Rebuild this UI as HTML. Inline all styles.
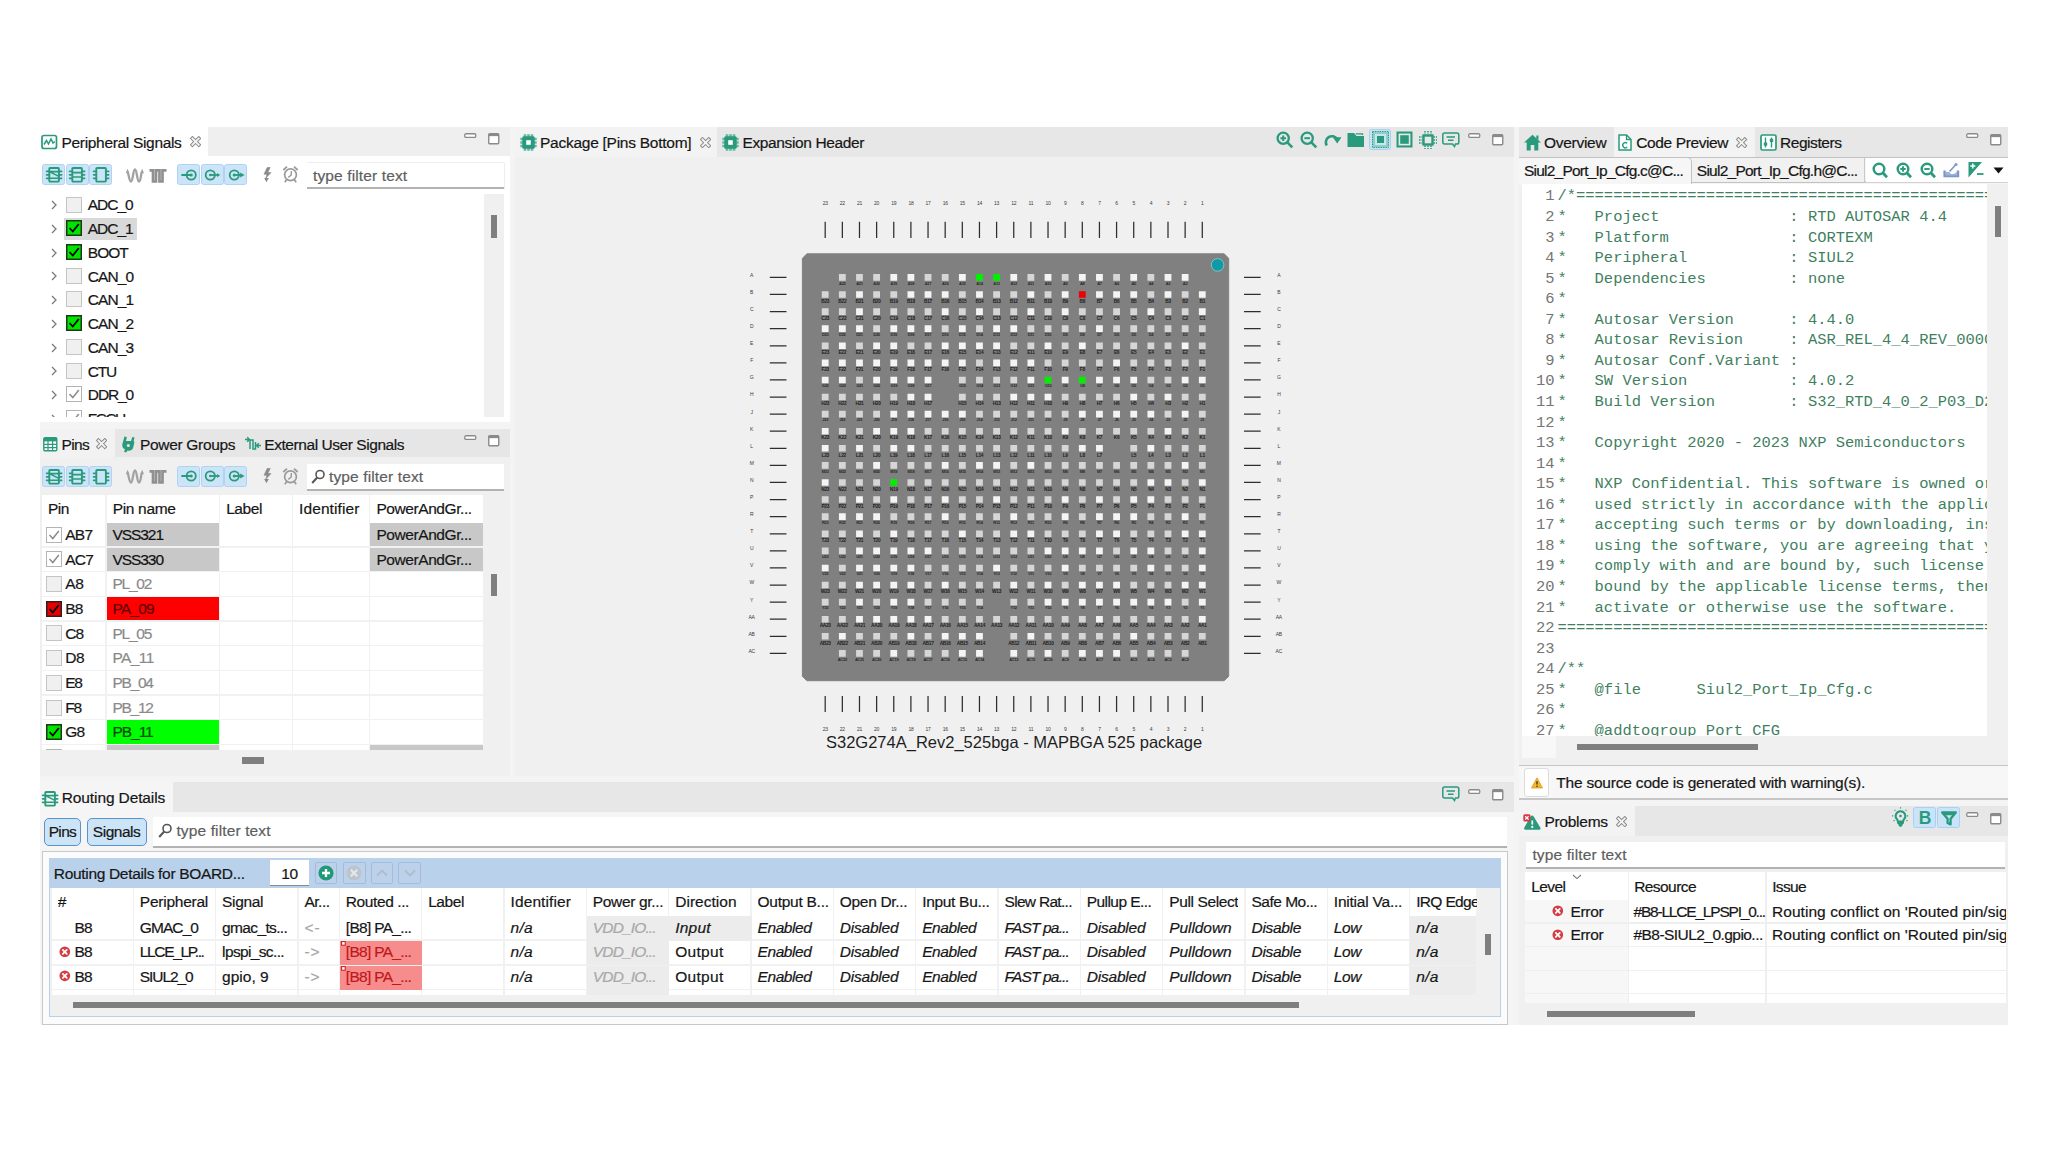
<!DOCTYPE html>
<html lang="en"><head><meta charset="utf-8"><title>S32 Pins Tool</title><style>
html,body{margin:0;padding:0;background:#fff}
body{width:2048px;height:1152px;position:relative;overflow:hidden;font-family:"Liberation Sans",sans-serif;font-size:15.5px;letter-spacing:-0.3px;color:#161616;-webkit-text-stroke:0.2px}
div,span.t,svg{position:absolute;display:block}
span.t{white-space:nowrap;-webkit-text-stroke:inherit}
svg text{-webkit-text-stroke:0}
</style></head><body>
<div style="left:40px;top:127px;width:1968px;height:898px;background:#f4f4f4"></div>
<div style="left:40px;top:127px;width:470px;height:295px;background:#fff"></div>
<div style="left:208px;top:127px;width:302px;height:29px;background:#efefef"></div>
<svg style="left:41px;top:134px;" width="17" height="17" viewBox="0 0 17 17"><rect x="1" y="1.5" width="14.5" height="13" rx="2" fill="none" stroke="#2a9a7c" stroke-width="1.7"/><path d="M3 10.5 L5.5 6.5 L7.5 10 L10 5 L12 9 L13.8 7.5" fill="none" stroke="#2a9a7c" stroke-width="1.5"/></svg>
<span class="t" style="left:61.5px;top:132.60px;line-height:20px;letter-spacing:-0.32px;">Peripheral Signals</span><svg style="left:189.9px;top:136.4px;" width="11.2" height="11.2" viewBox="0 0 12 12"><path d="M2.6 2.6 L9.4 9.4 M9.4 2.6 L2.6 9.4" stroke="#8e8e8e" stroke-width="4.1" stroke-linecap="square" fill="none"/><path d="M2.6 2.6 L9.4 9.4 M9.4 2.6 L2.6 9.4" stroke="#f6f6f6" stroke-width="1.9" stroke-linecap="square" fill="none"/></svg>
<svg style="left:463.5px;top:132.5px;" width="13" height="6" viewBox="0 0 13 6"><rect x="0.75" y="0.75" width="11" height="3.6" rx="1.2" fill="#fff" stroke="#8a8a8a" stroke-width="1.3"/></svg>
<svg style="left:487.5px;top:133px;" width="12" height="12" viewBox="0 0 12 12"><rect x="0.75" y="0.75" width="10" height="10" rx="1" fill="#fff" stroke="#8a8a8a" stroke-width="1.4"/><rect x="0.75" y="0.75" width="10" height="2.4" fill="#8a8a8a"/></svg>
<div style="left:42.2px;top:164px;width:23.0px;height:21px;background:#cce4f7;border:1px solid #aed3f3;border-radius:2.5px;box-sizing:border-box"></div>
<svg style="left:44.900000000000006px;top:164.8px;" width="18" height="19" viewBox="0 0 18 19"><g fill="none" stroke="#2a9a7c" stroke-width="1.9"><rect x="4.3" y="3" width="9.6" height="13.6" rx="0.8"/><path d="M1.6 6.3 H4.3 M13.9 6.3 H16.6" stroke-linecap="round" stroke-width="1.7"/><path d="M1.6 9.8 H4.3 M13.9 9.8 H16.6" stroke-linecap="round" stroke-width="1.7"/><path d="M1.6 13.3 H4.3 M13.9 13.3 H16.6" stroke-linecap="round" stroke-width="1.7"/><path d="M4.3 6.6 H13.9 M4.3 13.2 H13.9 M4.3 6.6 L13.9 11.4" stroke-width="1.6"/></g></svg>
<div style="left:65.7px;top:164px;width:23.0px;height:21px;background:#cce4f7;border:1px solid #aed3f3;border-radius:2.5px;box-sizing:border-box"></div>
<svg style="left:68.4px;top:164.8px;" width="18" height="19" viewBox="0 0 18 19"><g fill="none" stroke="#2a9a7c" stroke-width="1.9"><rect x="4.3" y="3" width="9.6" height="13.6" rx="0.8"/><path d="M1.6 6.3 H4.3 M13.9 6.3 H16.6" stroke-linecap="round" stroke-width="1.7"/><path d="M1.6 9.8 H4.3 M13.9 9.8 H16.6" stroke-linecap="round" stroke-width="1.7"/><path d="M1.6 13.3 H4.3 M13.9 13.3 H16.6" stroke-linecap="round" stroke-width="1.7"/><path d="M4.3 7.6 H13.9 M4.3 12 H13.9" stroke-width="1.6"/></g></svg>
<div style="left:89.2px;top:164px;width:23.0px;height:21px;background:#cce4f7;border:1px solid #aed3f3;border-radius:2.5px;box-sizing:border-box"></div>
<svg style="left:91.9px;top:164.8px;" width="18" height="19" viewBox="0 0 18 19"><g fill="none" stroke="#2a9a7c" stroke-width="1.9"><rect x="4.3" y="3" width="9.6" height="13.6" rx="0.8"/><path d="M1.6 6.3 H4.3 M13.9 6.3 H16.6" stroke-linecap="round" stroke-width="1.7"/><path d="M1.6 9.8 H4.3 M13.9 9.8 H16.6" stroke-linecap="round" stroke-width="1.7"/><path d="M1.6 13.3 H4.3 M13.9 13.3 H16.6" stroke-linecap="round" stroke-width="1.7"/></g></svg>
<svg style="left:125.7px;top:165.5px;" width="18" height="18" viewBox="0 0 18 18"><path d="M1.5 6 C2.5 6 3 15.5 5 15.5 S7 3.5 9 3.5 S11 15.5 13 15.5 S15 6 16 6" fill="none" stroke="#a2a2a2" stroke-width="2.3"/><path d="M-0.3 7.2 L1.6 2.8 L3.4 7.2 Z M14.3 7.2 L16.2 2.8 L18 7.2Z" fill="#a2a2a2"/></svg>
<svg style="left:149.2px;top:165.5px;" width="18" height="18" viewBox="0 0 18 18"><path d="M0.5 4.3 H4 V15.5 H7 V4.3 H10.5 V15.5 H13.5 V4.3 H17.5" fill="none" stroke="#909090" stroke-width="2.7"/></svg>
<div style="left:177.39999999999998px;top:164px;width:23.0px;height:21px;background:#cce4f7;border:1px solid #aed3f3;border-radius:2.5px;box-sizing:border-box"></div>
<svg style="left:179.89999999999998px;top:166.5px;" width="19" height="16" viewBox="0 0 19 16"><g fill="none" stroke="#2a9a7c" stroke-width="1.8"><circle cx="11.2" cy="8" r="4.6"/><circle cx="11.2" cy="8" r="1.6" fill="#2a9a7c" stroke="none"/><path d="M2 8 H10" stroke-linecap="round"/></g></svg>
<div style="left:200.89999999999998px;top:164px;width:23.0px;height:21px;background:#cce4f7;border:1px solid #aed3f3;border-radius:2.5px;box-sizing:border-box"></div>
<svg style="left:203.39999999999998px;top:166.5px;" width="19" height="16" viewBox="0 0 19 16"><g fill="none" stroke="#2a9a7c" stroke-width="1.8"><circle cx="7.3" cy="8" r="4.6"/><circle cx="7.3" cy="8" r="1.3" fill="#2a9a7c" stroke="none"/><path d="M7.5 8 H15"/><path d="M14 6 L17.3 8 L14 10 Z" fill="#2a9a7c" stroke="none"/></g></svg>
<div style="left:224.39999999999998px;top:164px;width:23.0px;height:21px;background:#cce4f7;border:1px solid #aed3f3;border-radius:2.5px;box-sizing:border-box"></div>
<svg style="left:226.89999999999998px;top:166.5px;" width="19" height="16" viewBox="0 0 19 16"><g fill="none" stroke="#2a9a7c" stroke-width="1.8"><circle cx="7.3" cy="8" r="4.6"/><circle cx="7.3" cy="8" r="1.6" fill="#2a9a7c" stroke="none"/><path d="M8 8 H14.5"/><path d="M13.2 5.6 L17.6 8 L13.2 10.4 Z" fill="#2a9a7c" stroke="none"/></g></svg>
<svg style="left:261.7px;top:165.5px;" width="10" height="18" viewBox="0 0 10 18"><path d="M5.2 1.5 L2 8.2 H5 L3.8 12.2 L9 6.6 H5.8 L8.2 1.5 Z" fill="#8a8a8a" stroke="#8a8a8a" stroke-width="0.6"/><path d="M2.2 12 L4.4 16.2 L6.8 12 Z" fill="#8a8a8a"/></svg>
<svg style="left:282.2px;top:165px;" width="17" height="18" viewBox="0 0 17 18"><g fill="none" stroke="#9a9a9a" stroke-width="1.7"><circle cx="8.5" cy="9.8" r="5.9"/><path d="M9.3 6 V10 L6.3 12.4" stroke-width="1.4"/><path d="M1.3 5 L5 1.6 M15.7 5 L12 1.6 M2.8 17.2 L4.6 14.8 M14.2 17.2 L12.4 14.8"/></g></svg>
<div style="left:306.5px;top:163px;width:197px;height:24px;background:#fff;border-bottom:2px solid #b2b2b2;box-shadow:0 -1px 0 #eee, 1px 0 0 #eee"></div>
<span class="t" style="left:313px;top:166.00px;line-height:20px;letter-spacing:0.13px;color:#5e5e5e">type filter text</span><div style="left:484px;top:194px;width:20px;height:223px;background:#f0f0f0"></div>
<div style="left:490.7px;top:214.7px;width:6.7px;height:23px;background:#7f7f7f"></div>
<div style="left:40px;top:194px;width:444px;height:222.5px;overflow:hidden"><svg style="left:11px;top:6.099999999999994px;" width="6" height="10" viewBox="0 0 6 10"><path d="M1 1 L5 5 L1 9" fill="none" stroke="#7a7a7a" stroke-width="1.3"/></svg>
<svg style="left:26.299999999999997px;top:2.4999999999999947px;" width="16" height="16" viewBox="0 0 16 16"><rect x="0.5" y="0.5" width="15" height="15" fill="#f0f0f0" stroke="#c4c4c4"/></svg>
<span class="t" style="left:47.8px;top:1.40px;line-height:20px;letter-spacing:-1.04px;">ADC_0</span><div style="left:24.400000000000006px;top:23.840000000000003px;width:72.5px;height:22px;background:#d9d9d9"></div>
<svg style="left:11px;top:29.840000000000003px;" width="6" height="10" viewBox="0 0 6 10"><path d="M1 1 L5 5 L1 9" fill="none" stroke="#7a7a7a" stroke-width="1.3"/></svg>
<svg style="left:26.299999999999997px;top:26.240000000000002px;" width="16" height="16" viewBox="0 0 16 16"><rect x="0.75" y="0.75" width="14.5" height="14.5" fill="#00e400" stroke="#1a3a1a" stroke-width="1.5"/><path d="M3.5 8 L6.8 11.5 L12.8 4" fill="none" stroke="#000" stroke-width="1.8"/></svg>
<span class="t" style="left:47.8px;top:25.14px;line-height:20px;letter-spacing:-1.04px;">ADC_1</span><svg style="left:11px;top:53.579999999999984px;" width="6" height="10" viewBox="0 0 6 10"><path d="M1 1 L5 5 L1 9" fill="none" stroke="#7a7a7a" stroke-width="1.3"/></svg>
<svg style="left:26.299999999999997px;top:49.97999999999998px;" width="16" height="16" viewBox="0 0 16 16"><rect x="0.75" y="0.75" width="14.5" height="14.5" fill="#00e400" stroke="#1a3a1a" stroke-width="1.5"/><path d="M3.5 8 L6.8 11.5 L12.8 4" fill="none" stroke="#000" stroke-width="1.8"/></svg>
<span class="t" style="left:47.8px;top:48.88px;line-height:20px;letter-spacing:-1.00px;">BOOT</span><svg style="left:11px;top:77.32px;" width="6" height="10" viewBox="0 0 6 10"><path d="M1 1 L5 5 L1 9" fill="none" stroke="#7a7a7a" stroke-width="1.3"/></svg>
<svg style="left:26.299999999999997px;top:73.72px;" width="16" height="16" viewBox="0 0 16 16"><rect x="0.5" y="0.5" width="15" height="15" fill="#f0f0f0" stroke="#c4c4c4"/></svg>
<span class="t" style="left:47.8px;top:72.62px;line-height:20px;letter-spacing:-0.90px;">CAN_0</span><svg style="left:11px;top:101.06px;" width="6" height="10" viewBox="0 0 6 10"><path d="M1 1 L5 5 L1 9" fill="none" stroke="#7a7a7a" stroke-width="1.3"/></svg>
<svg style="left:26.299999999999997px;top:97.46000000000001px;" width="16" height="16" viewBox="0 0 16 16"><rect x="0.5" y="0.5" width="15" height="15" fill="#f0f0f0" stroke="#c4c4c4"/></svg>
<span class="t" style="left:47.8px;top:96.36px;line-height:20px;letter-spacing:-0.90px;">CAN_1</span><svg style="left:11px;top:124.79999999999995px;" width="6" height="10" viewBox="0 0 6 10"><path d="M1 1 L5 5 L1 9" fill="none" stroke="#7a7a7a" stroke-width="1.3"/></svg>
<svg style="left:26.299999999999997px;top:121.19999999999996px;" width="16" height="16" viewBox="0 0 16 16"><rect x="0.75" y="0.75" width="14.5" height="14.5" fill="#00e400" stroke="#1a3a1a" stroke-width="1.5"/><path d="M3.5 8 L6.8 11.5 L12.8 4" fill="none" stroke="#000" stroke-width="1.8"/></svg>
<span class="t" style="left:47.8px;top:120.10px;line-height:20px;letter-spacing:-0.90px;">CAN_2</span><svg style="left:11px;top:148.53999999999996px;" width="6" height="10" viewBox="0 0 6 10"><path d="M1 1 L5 5 L1 9" fill="none" stroke="#7a7a7a" stroke-width="1.3"/></svg>
<svg style="left:26.299999999999997px;top:144.93999999999997px;" width="16" height="16" viewBox="0 0 16 16"><rect x="0.5" y="0.5" width="15" height="15" fill="#f0f0f0" stroke="#c4c4c4"/></svg>
<span class="t" style="left:47.8px;top:143.84px;line-height:20px;letter-spacing:-0.90px;">CAN_3</span><svg style="left:11px;top:172.27999999999997px;" width="6" height="10" viewBox="0 0 6 10"><path d="M1 1 L5 5 L1 9" fill="none" stroke="#7a7a7a" stroke-width="1.3"/></svg>
<svg style="left:26.299999999999997px;top:168.67999999999998px;" width="16" height="16" viewBox="0 0 16 16"><rect x="0.5" y="0.5" width="15" height="15" fill="#f0f0f0" stroke="#c4c4c4"/></svg>
<span class="t" style="left:47.8px;top:167.58px;line-height:20px;letter-spacing:-1.27px;">CTU</span><svg style="left:11px;top:196.01999999999998px;" width="6" height="10" viewBox="0 0 6 10"><path d="M1 1 L5 5 L1 9" fill="none" stroke="#7a7a7a" stroke-width="1.3"/></svg>
<svg style="left:26.299999999999997px;top:192.42px;" width="16" height="16" viewBox="0 0 16 16"><rect x="0.5" y="0.5" width="15" height="15" fill="#fff" stroke="#b4b4b4"/><path d="M3.5 8 L6.8 11.5 L12.8 4" fill="none" stroke="#8c8c8c" stroke-width="1.5"/></svg>
<span class="t" style="left:47.8px;top:191.32px;line-height:20px;letter-spacing:-1.10px;">DDR_0</span><svg style="left:11px;top:219.76px;" width="6" height="10" viewBox="0 0 6 10"><path d="M1 1 L5 5 L1 9" fill="none" stroke="#7a7a7a" stroke-width="1.3"/></svg>
<svg style="left:26.299999999999997px;top:216.16px;" width="16" height="16" viewBox="0 0 16 16"><rect x="0.5" y="0.5" width="15" height="15" fill="#fff" stroke="#b4b4b4"/><path d="M3.5 8 L6.8 11.5 L12.8 4" fill="none" stroke="#8c8c8c" stroke-width="1.5"/></svg>
<span class="t" style="left:47.8px;top:215.06px;line-height:20px;letter-spacing:-1.52px;">FCCU</span></div>
<div style="left:40px;top:429px;width:470px;height:347px;background:#f0f0f0"></div>
<div style="left:40px;top:429px;width:470px;height:28.3px;background:#e6e6e6"></div>
<div style="left:40px;top:429px;width:75px;height:28.3px;background:#f2f2f2"></div>
<svg style="left:42.5px;top:437px;" width="15" height="15" viewBox="0 0 15 15"><rect x="0.8" y="0.8" width="13" height="13" rx="1.2" fill="#fff" stroke="#2a9a7c" stroke-width="1.4"/><rect x="0.8" y="0.8" width="13" height="3.6" fill="#2a9a7c"/><path d="M5 1 V14 M9.6 1 V14 M1 7.4 H14 M1 10.6 H14" stroke="#2a9a7c" stroke-width="1.2"/></svg>
<span class="t" style="left:61.5px;top:434.60px;line-height:20px;letter-spacing:-0.66px;">Pins</span><svg style="left:95.7px;top:438.4px;" width="11.2" height="11.2" viewBox="0 0 12 12"><path d="M2.6 2.6 L9.4 9.4 M9.4 2.6 L2.6 9.4" stroke="#8e8e8e" stroke-width="4.1" stroke-linecap="square" fill="none"/><path d="M2.6 2.6 L9.4 9.4 M9.4 2.6 L2.6 9.4" stroke="#f6f6f6" stroke-width="1.9" stroke-linecap="square" fill="none"/></svg>
<svg style="left:120.5px;top:436px;" width="15" height="17" viewBox="0 0 15 17"><path d="M3.5 0.5 L5.8 1 L5 5 H10 L11.3 1 L13.5 1.6 L12.6 5.5 L13.5 5.8 L12.2 11.5 C11.5 14 9 15.3 6.5 14.6 L5.2 16.5 L3 15.8 L4 13.5 C1.5 12 0.8 10 1.5 7.5 L2.2 5 Z" fill="#2a9a7c"/><circle cx="7.3" cy="9.6" r="1.5" fill="#e6e6e6"/></svg>
<span class="t" style="left:140px;top:434.60px;line-height:20px;letter-spacing:-0.32px;">Power Groups</span><svg style="left:243.5px;top:436px;" width="18" height="16" viewBox="0 0 18 16"><g fill="none" stroke="#2a9a7c" stroke-width="1.5"><path d="M1 3.5 H5 M3.2 1.2 L5.5 3.5 L3.2 5.8"/><path d="M6 13 V4 H9 V13 H11.5 V6"/><path d="M17 9.5 H13 M14.8 7.2 L12.5 9.5 L14.8 11.8"/></g></svg>
<span class="t" style="left:264.3px;top:434.60px;line-height:20px;letter-spacing:-0.44px;">External User Signals</span><svg style="left:463.5px;top:435.3px;" width="13" height="6" viewBox="0 0 13 6"><rect x="0.75" y="0.75" width="11" height="3.6" rx="1.2" fill="#fff" stroke="#8a8a8a" stroke-width="1.3"/></svg>
<svg style="left:488px;top:434.8px;" width="12" height="12" viewBox="0 0 12 12"><rect x="0.75" y="0.75" width="10" height="10" rx="1" fill="#fff" stroke="#8a8a8a" stroke-width="1.4"/><rect x="0.75" y="0.75" width="10" height="2.4" fill="#8a8a8a"/></svg>
<div style="left:42.2px;top:465.8px;width:23.0px;height:21px;background:#cce4f7;border:1px solid #aed3f3;border-radius:2.5px;box-sizing:border-box"></div>
<svg style="left:44.900000000000006px;top:466.6px;" width="18" height="19" viewBox="0 0 18 19"><g fill="none" stroke="#2a9a7c" stroke-width="1.9"><rect x="4.3" y="3" width="9.6" height="13.6" rx="0.8"/><path d="M1.6 6.3 H4.3 M13.9 6.3 H16.6" stroke-linecap="round" stroke-width="1.7"/><path d="M1.6 9.8 H4.3 M13.9 9.8 H16.6" stroke-linecap="round" stroke-width="1.7"/><path d="M1.6 13.3 H4.3 M13.9 13.3 H16.6" stroke-linecap="round" stroke-width="1.7"/><path d="M4.3 6.6 H13.9 M4.3 13.2 H13.9 M4.3 6.6 L13.9 11.4" stroke-width="1.6"/></g></svg>
<div style="left:65.7px;top:465.8px;width:23.0px;height:21px;background:#cce4f7;border:1px solid #aed3f3;border-radius:2.5px;box-sizing:border-box"></div>
<svg style="left:68.4px;top:466.6px;" width="18" height="19" viewBox="0 0 18 19"><g fill="none" stroke="#2a9a7c" stroke-width="1.9"><rect x="4.3" y="3" width="9.6" height="13.6" rx="0.8"/><path d="M1.6 6.3 H4.3 M13.9 6.3 H16.6" stroke-linecap="round" stroke-width="1.7"/><path d="M1.6 9.8 H4.3 M13.9 9.8 H16.6" stroke-linecap="round" stroke-width="1.7"/><path d="M1.6 13.3 H4.3 M13.9 13.3 H16.6" stroke-linecap="round" stroke-width="1.7"/><path d="M4.3 7.6 H13.9 M4.3 12 H13.9" stroke-width="1.6"/></g></svg>
<div style="left:89.2px;top:465.8px;width:23.0px;height:21px;background:#cce4f7;border:1px solid #aed3f3;border-radius:2.5px;box-sizing:border-box"></div>
<svg style="left:91.9px;top:466.6px;" width="18" height="19" viewBox="0 0 18 19"><g fill="none" stroke="#2a9a7c" stroke-width="1.9"><rect x="4.3" y="3" width="9.6" height="13.6" rx="0.8"/><path d="M1.6 6.3 H4.3 M13.9 6.3 H16.6" stroke-linecap="round" stroke-width="1.7"/><path d="M1.6 9.8 H4.3 M13.9 9.8 H16.6" stroke-linecap="round" stroke-width="1.7"/><path d="M1.6 13.3 H4.3 M13.9 13.3 H16.6" stroke-linecap="round" stroke-width="1.7"/></g></svg>
<svg style="left:125.7px;top:467.3px;" width="18" height="18" viewBox="0 0 18 18"><path d="M1.5 6 C2.5 6 3 15.5 5 15.5 S7 3.5 9 3.5 S11 15.5 13 15.5 S15 6 16 6" fill="none" stroke="#a2a2a2" stroke-width="2.3"/><path d="M-0.3 7.2 L1.6 2.8 L3.4 7.2 Z M14.3 7.2 L16.2 2.8 L18 7.2Z" fill="#a2a2a2"/></svg>
<svg style="left:149.2px;top:467.3px;" width="18" height="18" viewBox="0 0 18 18"><path d="M0.5 4.3 H4 V15.5 H7 V4.3 H10.5 V15.5 H13.5 V4.3 H17.5" fill="none" stroke="#909090" stroke-width="2.7"/></svg>
<div style="left:177.39999999999998px;top:465.8px;width:23.0px;height:21px;background:#cce4f7;border:1px solid #aed3f3;border-radius:2.5px;box-sizing:border-box"></div>
<svg style="left:179.89999999999998px;top:468.3px;" width="19" height="16" viewBox="0 0 19 16"><g fill="none" stroke="#2a9a7c" stroke-width="1.8"><circle cx="11.2" cy="8" r="4.6"/><circle cx="11.2" cy="8" r="1.6" fill="#2a9a7c" stroke="none"/><path d="M2 8 H10" stroke-linecap="round"/></g></svg>
<div style="left:200.89999999999998px;top:465.8px;width:23.0px;height:21px;background:#cce4f7;border:1px solid #aed3f3;border-radius:2.5px;box-sizing:border-box"></div>
<svg style="left:203.39999999999998px;top:468.3px;" width="19" height="16" viewBox="0 0 19 16"><g fill="none" stroke="#2a9a7c" stroke-width="1.8"><circle cx="7.3" cy="8" r="4.6"/><circle cx="7.3" cy="8" r="1.3" fill="#2a9a7c" stroke="none"/><path d="M7.5 8 H15"/><path d="M14 6 L17.3 8 L14 10 Z" fill="#2a9a7c" stroke="none"/></g></svg>
<div style="left:224.39999999999998px;top:465.8px;width:23.0px;height:21px;background:#cce4f7;border:1px solid #aed3f3;border-radius:2.5px;box-sizing:border-box"></div>
<svg style="left:226.89999999999998px;top:468.3px;" width="19" height="16" viewBox="0 0 19 16"><g fill="none" stroke="#2a9a7c" stroke-width="1.8"><circle cx="7.3" cy="8" r="4.6"/><circle cx="7.3" cy="8" r="1.6" fill="#2a9a7c" stroke="none"/><path d="M8 8 H14.5"/><path d="M13.2 5.6 L17.6 8 L13.2 10.4 Z" fill="#2a9a7c" stroke="none"/></g></svg>
<svg style="left:261.7px;top:467.3px;" width="10" height="18" viewBox="0 0 10 18"><path d="M5.2 1.5 L2 8.2 H5 L3.8 12.2 L9 6.6 H5.8 L8.2 1.5 Z" fill="#8a8a8a" stroke="#8a8a8a" stroke-width="0.6"/><path d="M2.2 12 L4.4 16.2 L6.8 12 Z" fill="#8a8a8a"/></svg>
<svg style="left:282.2px;top:466.8px;" width="17" height="18" viewBox="0 0 17 18"><g fill="none" stroke="#9a9a9a" stroke-width="1.7"><circle cx="8.5" cy="9.8" r="5.9"/><path d="M9.3 6 V10 L6.3 12.4" stroke-width="1.4"/><path d="M1.3 5 L5 1.6 M15.7 5 L12 1.6 M2.8 17.2 L4.6 14.8 M14.2 17.2 L12.4 14.8"/></g></svg>
<div style="left:306.5px;top:464px;width:197px;height:24.5px;background:#fff;border-bottom:2px solid #b2b2b2"></div>
<svg style="left:311px;top:469px;" width="14" height="15" viewBox="0 0 14 15"><g fill="none" stroke="#555" stroke-width="1.6"><circle cx="9" cy="5.5" r="4"/><path d="M6.2 8.5 L1.2 14" stroke-width="2"/></g></svg>
<span class="t" style="left:329px;top:467.30px;line-height:20px;letter-spacing:0.13px;color:#5e5e5e">type filter text</span><div style="left:42px;top:495px;width:441px;height:254.6px;overflow:hidden;background:#f1f1f1"><div style="left:0px;top:0px;width:63px;height:27.6px;background:#fff"></div>
<span class="t" style="left:6px;top:4.40px;line-height:20px;letter-spacing:-0.47px;">Pin</span><div style="left:64.7px;top:0px;width:112.49999999999999px;height:27.6px;background:#fff"></div>
<span class="t" style="left:70.7px;top:4.40px;line-height:20px;letter-spacing:-0.32px;">Pin name</span><div style="left:178.2px;top:0px;width:71.80000000000001px;height:27.6px;background:#fff"></div>
<span class="t" style="left:184.2px;top:4.40px;line-height:20px;letter-spacing:-0.44px;">Label</span><div style="left:251px;top:0px;width:76.39999999999998px;height:27.6px;background:#fff"></div>
<span class="t" style="left:257px;top:4.40px;line-height:20px;letter-spacing:0.11px;">Identifier</span><div style="left:328.4px;top:0px;width:112.20000000000005px;height:27.6px;background:#fff"></div>
<span class="t" style="left:334.4px;top:4.40px;line-height:20px;letter-spacing:-0.42px;">PowerAndGr...</span><div style="left:0px;top:27.800000000000022px;width:63px;height:23.4px;background:#fff"></div>
<div style="left:64.7px;top:27.800000000000022px;width:112.49999999999999px;height:23.4px;background:#fff"></div>
<div style="left:178.2px;top:27.800000000000022px;width:71.80000000000001px;height:23.4px;background:#fff"></div>
<div style="left:251px;top:27.800000000000022px;width:76.39999999999998px;height:23.4px;background:#fff"></div>
<div style="left:328.4px;top:27.800000000000022px;width:112.20000000000005px;height:23.4px;background:#fff"></div>
<div style="left:64.7px;top:27.800000000000022px;width:112.49999999999999px;height:23.4px;background:#c8c8c8"></div>
<div style="left:328.4px;top:27.800000000000022px;width:112.20000000000005px;height:23.4px;background:#c8c8c8"></div>
<span class="t" style="left:334.4px;top:29.80px;line-height:20px;letter-spacing:-0.42px;">PowerAndGr...</span><svg style="left:4px;top:31.600000000000023px;" width="16" height="16" viewBox="0 0 16 16"><rect x="0.5" y="0.5" width="15" height="15" fill="#fff" stroke="#b4b4b4"/><path d="M3.5 8 L6.8 11.5 L12.8 4" fill="none" stroke="#8c8c8c" stroke-width="1.5"/></svg>
<span class="t" style="left:23.299999999999997px;top:29.80px;line-height:20px;letter-spacing:-0.79px;">AB7</span><span class="t" style="left:70.4px;top:29.80px;line-height:20px;letter-spacing:-1.04px;color:#111">VSS321</span><div style="left:0px;top:52.50000000000007px;width:63px;height:23.4px;background:#fff"></div>
<div style="left:64.7px;top:52.50000000000007px;width:112.49999999999999px;height:23.4px;background:#fff"></div>
<div style="left:178.2px;top:52.50000000000007px;width:71.80000000000001px;height:23.4px;background:#fff"></div>
<div style="left:251px;top:52.50000000000007px;width:76.39999999999998px;height:23.4px;background:#fff"></div>
<div style="left:328.4px;top:52.50000000000007px;width:112.20000000000005px;height:23.4px;background:#fff"></div>
<div style="left:64.7px;top:52.50000000000007px;width:112.49999999999999px;height:23.4px;background:#c8c8c8"></div>
<div style="left:328.4px;top:52.50000000000007px;width:112.20000000000005px;height:23.4px;background:#c8c8c8"></div>
<span class="t" style="left:334.4px;top:54.50px;line-height:20px;letter-spacing:-0.42px;">PowerAndGr...</span><svg style="left:4px;top:56.30000000000007px;" width="16" height="16" viewBox="0 0 16 16"><rect x="0.5" y="0.5" width="15" height="15" fill="#fff" stroke="#b4b4b4"/><path d="M3.5 8 L6.8 11.5 L12.8 4" fill="none" stroke="#8c8c8c" stroke-width="1.5"/></svg>
<span class="t" style="left:23.299999999999997px;top:54.50px;line-height:20px;letter-spacing:-0.84px;">AC7</span><span class="t" style="left:70.4px;top:54.50px;line-height:20px;letter-spacing:-1.04px;color:#111">VSS330</span><div style="left:0px;top:77.2px;width:63px;height:23.4px;background:#fff"></div>
<div style="left:64.7px;top:77.2px;width:112.49999999999999px;height:23.4px;background:#fff"></div>
<div style="left:178.2px;top:77.2px;width:71.80000000000001px;height:23.4px;background:#fff"></div>
<div style="left:251px;top:77.2px;width:76.39999999999998px;height:23.4px;background:#fff"></div>
<div style="left:328.4px;top:77.2px;width:112.20000000000005px;height:23.4px;background:#fff"></div>
<svg style="left:4px;top:81.0px;" width="16" height="16" viewBox="0 0 16 16"><rect x="0.5" y="0.5" width="15" height="15" fill="#f0f0f0" stroke="#c4c4c4"/></svg>
<span class="t" style="left:23.299999999999997px;top:79.20px;line-height:20px;letter-spacing:-0.40px;">A8</span><span class="t" style="left:70.4px;top:79.20px;line-height:20px;letter-spacing:-1.22px;color:#8a8a8a">PL_02</span><div style="left:0px;top:101.90000000000005px;width:63px;height:23.4px;background:#fff"></div>
<div style="left:64.7px;top:101.90000000000005px;width:112.49999999999999px;height:23.4px;background:#fff"></div>
<div style="left:178.2px;top:101.90000000000005px;width:71.80000000000001px;height:23.4px;background:#fff"></div>
<div style="left:251px;top:101.90000000000005px;width:76.39999999999998px;height:23.4px;background:#fff"></div>
<div style="left:328.4px;top:101.90000000000005px;width:112.20000000000005px;height:23.4px;background:#fff"></div>
<div style="left:64.7px;top:101.90000000000005px;width:112.49999999999999px;height:23.4px;background:#ff0000"></div>
<svg style="left:4px;top:105.70000000000005px;" width="16" height="16" viewBox="0 0 16 16"><rect x="0.75" y="0.75" width="14.5" height="14.5" fill="#e40000" stroke="#3a1a1a" stroke-width="1.5"/><path d="M3.5 8 L6.8 11.5 L12.8 4" fill="none" stroke="#000" stroke-width="1.8"/></svg>
<span class="t" style="left:23.299999999999997px;top:103.90px;line-height:20px;letter-spacing:-0.95px;">B8</span><span class="t" style="left:70.4px;top:103.90px;line-height:20px;letter-spacing:-0.80px;color:#5c0000">PA_09</span><div style="left:0px;top:126.59999999999998px;width:63px;height:23.4px;background:#fff"></div>
<div style="left:64.7px;top:126.59999999999998px;width:112.49999999999999px;height:23.4px;background:#fff"></div>
<div style="left:178.2px;top:126.59999999999998px;width:71.80000000000001px;height:23.4px;background:#fff"></div>
<div style="left:251px;top:126.59999999999998px;width:76.39999999999998px;height:23.4px;background:#fff"></div>
<div style="left:328.4px;top:126.59999999999998px;width:112.20000000000005px;height:23.4px;background:#fff"></div>
<svg style="left:4px;top:130.39999999999998px;" width="16" height="16" viewBox="0 0 16 16"><rect x="0.5" y="0.5" width="15" height="15" fill="#f0f0f0" stroke="#c4c4c4"/></svg>
<span class="t" style="left:23.299999999999997px;top:128.60px;line-height:20px;letter-spacing:-1.03px;">C8</span><span class="t" style="left:70.4px;top:128.60px;line-height:20px;letter-spacing:-1.22px;color:#8a8a8a">PL_05</span><div style="left:0px;top:151.3px;width:63px;height:23.4px;background:#fff"></div>
<div style="left:64.7px;top:151.3px;width:112.49999999999999px;height:23.4px;background:#fff"></div>
<div style="left:178.2px;top:151.3px;width:71.80000000000001px;height:23.4px;background:#fff"></div>
<div style="left:251px;top:151.3px;width:76.39999999999998px;height:23.4px;background:#fff"></div>
<div style="left:328.4px;top:151.3px;width:112.20000000000005px;height:23.4px;background:#fff"></div>
<svg style="left:4px;top:155.10000000000002px;" width="16" height="16" viewBox="0 0 16 16"><rect x="0.5" y="0.5" width="15" height="15" fill="#f0f0f0" stroke="#c4c4c4"/></svg>
<span class="t" style="left:23.299999999999997px;top:153.30px;line-height:20px;letter-spacing:-0.40px;">D8</span><span class="t" style="left:70.4px;top:153.30px;line-height:20px;letter-spacing:-0.57px;color:#8a8a8a">PA_11</span><div style="left:0px;top:175.99999999999994px;width:63px;height:23.4px;background:#fff"></div>
<div style="left:64.7px;top:175.99999999999994px;width:112.49999999999999px;height:23.4px;background:#fff"></div>
<div style="left:178.2px;top:175.99999999999994px;width:71.80000000000001px;height:23.4px;background:#fff"></div>
<div style="left:251px;top:175.99999999999994px;width:76.39999999999998px;height:23.4px;background:#fff"></div>
<div style="left:328.4px;top:175.99999999999994px;width:112.20000000000005px;height:23.4px;background:#fff"></div>
<svg style="left:4px;top:179.79999999999995px;" width="16" height="16" viewBox="0 0 16 16"><rect x="0.5" y="0.5" width="15" height="15" fill="#f0f0f0" stroke="#c4c4c4"/></svg>
<span class="t" style="left:23.299999999999997px;top:178.00px;line-height:20px;letter-spacing:-1.47px;">E8</span><span class="t" style="left:70.4px;top:178.00px;line-height:20px;letter-spacing:-1.25px;color:#8a8a8a">PB_04</span><div style="left:0px;top:200.7px;width:63px;height:23.4px;background:#fff"></div>
<div style="left:64.7px;top:200.7px;width:112.49999999999999px;height:23.4px;background:#fff"></div>
<div style="left:178.2px;top:200.7px;width:71.80000000000001px;height:23.4px;background:#fff"></div>
<div style="left:251px;top:200.7px;width:76.39999999999998px;height:23.4px;background:#fff"></div>
<div style="left:328.4px;top:200.7px;width:112.20000000000005px;height:23.4px;background:#fff"></div>
<svg style="left:4px;top:204.5px;" width="16" height="16" viewBox="0 0 16 16"><rect x="0.5" y="0.5" width="15" height="15" fill="#f0f0f0" stroke="#c4c4c4"/></svg>
<span class="t" style="left:23.299999999999997px;top:202.70px;line-height:20px;letter-spacing:-1.17px;">F8</span><span class="t" style="left:70.4px;top:202.70px;line-height:20px;letter-spacing:-1.25px;color:#8a8a8a">PB_12</span><div style="left:0px;top:225.40000000000003px;width:63px;height:23.4px;background:#fff"></div>
<div style="left:64.7px;top:225.40000000000003px;width:112.49999999999999px;height:23.4px;background:#fff"></div>
<div style="left:178.2px;top:225.40000000000003px;width:71.80000000000001px;height:23.4px;background:#fff"></div>
<div style="left:251px;top:225.40000000000003px;width:76.39999999999998px;height:23.4px;background:#fff"></div>
<div style="left:328.4px;top:225.40000000000003px;width:112.20000000000005px;height:23.4px;background:#fff"></div>
<div style="left:64.7px;top:225.40000000000003px;width:112.49999999999999px;height:23.4px;background:#00ff00"></div>
<svg style="left:4px;top:229.20000000000005px;" width="16" height="16" viewBox="0 0 16 16"><rect x="0.75" y="0.75" width="14.5" height="14.5" fill="#00e400" stroke="#1a3a1a" stroke-width="1.5"/><path d="M3.5 8 L6.8 11.5 L12.8 4" fill="none" stroke="#000" stroke-width="1.8"/></svg>
<span class="t" style="left:23.299999999999997px;top:227.40px;line-height:20px;letter-spacing:-0.95px;">G8</span><span class="t" style="left:70.4px;top:227.40px;line-height:20px;letter-spacing:-1.02px;color:#004a00">PB_11</span><div style="left:0px;top:250.09999999999997px;width:63px;height:23.4px;background:#fff"></div>
<div style="left:64.7px;top:250.09999999999997px;width:112.49999999999999px;height:23.4px;background:#fff"></div>
<div style="left:178.2px;top:250.09999999999997px;width:71.80000000000001px;height:23.4px;background:#fff"></div>
<div style="left:251px;top:250.09999999999997px;width:76.39999999999998px;height:23.4px;background:#fff"></div>
<div style="left:328.4px;top:250.09999999999997px;width:112.20000000000005px;height:23.4px;background:#fff"></div>
<div style="left:64.7px;top:250.09999999999997px;width:112.49999999999999px;height:23.4px;background:#c8c8c8"></div>
<div style="left:328.4px;top:250.09999999999997px;width:112.20000000000005px;height:23.4px;background:#c8c8c8"></div>
<span class="t" style="left:334.4px;top:252.10px;line-height:20px;letter-spacing:-0.42px;">PowerAndGr...</span><svg style="left:4px;top:253.89999999999998px;" width="16" height="16" viewBox="0 0 16 16"><rect x="0.5" y="0.5" width="15" height="15" fill="#fff" stroke="#b4b4b4"/><path d="M3.5 8 L6.8 11.5 L12.8 4" fill="none" stroke="#8c8c8c" stroke-width="1.5"/></svg>
<span class="t" style="left:23.299999999999997px;top:252.10px;line-height:20px;letter-spacing:-0.33px;">H8</span><span class="t" style="left:70.4px;top:252.10px;line-height:20px;letter-spacing:-1.73px;color:#111">VSS</span></div>
<div style="left:490.8px;top:574px;width:6.5px;height:22px;background:#7f7f7f"></div>
<div style="left:242px;top:757.2px;width:21.8px;height:6.4px;background:#7f7f7f"></div>
<div style="left:515px;top:127px;width:999px;height:649px;background:#f0f0f0"></div>
<div style="left:515px;top:127px;width:999px;height:29.5px;background:#e7e7e7"></div>
<div style="left:515px;top:127px;width:202px;height:29.5px;background:#f3f3f3"></div>
<svg style="left:519.6px;top:133.7px;" width="17" height="17" viewBox="0 0 17 17"><path d="M5 0.3 V16.7 M8.5 0.3 V16.7 M12 0.3 V16.7 M0.3 5 H16.7 M0.3 8.5 H16.7 M0.3 12 H16.7" stroke="#63b8a2" stroke-width="2.6"/><rect x="2.3" y="2.3" width="12.4" height="12.4" rx="1.5" fill="#2a9a7c"/><rect x="6.2" y="6.2" width="4.6" height="4.6" fill="#fff"/></svg>
<span class="t" style="left:540px;top:132.80px;line-height:20px;letter-spacing:-0.26px;">Package [Pins Bottom]</span><svg style="left:699.9px;top:136.9px;" width="11.2" height="11.2" viewBox="0 0 12 12"><path d="M2.6 2.6 L9.4 9.4 M9.4 2.6 L2.6 9.4" stroke="#8e8e8e" stroke-width="4.1" stroke-linecap="square" fill="none"/><path d="M2.6 2.6 L9.4 9.4 M9.4 2.6 L2.6 9.4" stroke="#f6f6f6" stroke-width="1.9" stroke-linecap="square" fill="none"/></svg>
<svg style="left:722.3px;top:133.7px;" width="17" height="17" viewBox="0 0 17 17"><path d="M5 0.3 V16.7 M8.5 0.3 V16.7 M12 0.3 V16.7 M0.3 5 H16.7 M0.3 8.5 H16.7 M0.3 12 H16.7" stroke="#63b8a2" stroke-width="2.6"/><rect x="2.3" y="2.3" width="12.4" height="12.4" rx="1.5" fill="#2a9a7c"/><rect x="6.2" y="6.2" width="4.6" height="4.6" fill="#fff"/></svg>
<span class="t" style="left:742.5px;top:132.80px;line-height:20px;letter-spacing:-0.38px;">Expansion Header</span><svg style="left:1276px;top:130.5px;" width="18" height="18" viewBox="0 0 18 18"><circle cx="7.2" cy="7.2" r="5.6" fill="none" stroke="#2a9a7c" stroke-width="2.3"/><path d="M11.3 11.3 L16.3 16.3" stroke="#2a9a7c" stroke-width="2.6"/><path d="M4.4 7.2 H10 M7.2 4.4 V10" stroke="#2a9a7c" stroke-width="2"/></svg>
<svg style="left:1300px;top:130.5px;" width="18" height="18" viewBox="0 0 18 18"><circle cx="7.2" cy="7.2" r="5.6" fill="none" stroke="#2a9a7c" stroke-width="2.3"/><path d="M11.3 11.3 L16.3 16.3" stroke="#2a9a7c" stroke-width="2.6"/><path d="M4.4 7.2 H10" stroke="#2a9a7c" stroke-width="2"/></svg>
<svg style="left:1323.5px;top:131px;" width="18" height="17" viewBox="0 0 18 17"><path d="M2.8 14.5 A6 6 0 1 1 13 8" fill="none" stroke="#2a9a7c" stroke-width="2.6"/><path d="M8.8 6.2 L17.5 6.2 L13.2 12.4 Z" fill="#2a9a7c"/></svg>
<svg style="left:1347px;top:131.5px;" width="18" height="16" viewBox="0 0 18 16"><path d="M0.5 1 H7 L9.5 4 H17 V15 H0.5 Z" fill="#2a9a7c"/><path d="M8.8 1.8 H15.5 V3" stroke="#2a9a7c" fill="none" stroke-width="1.3"/></svg>
<div style="left:1368.8px;top:128.5px;width:22.6px;height:21px;background:#c9e3f8;border:1px solid #a6d0f4;border-radius:2.5px;box-sizing:border-box"></div>
<svg style="left:1372px;top:131px;" width="17" height="17" viewBox="0 0 17 17"><rect x="0.5" y="0.5" width="16" height="16" fill="#8fd0c0" stroke="#2a9a7c" stroke-dasharray="1.4 1" stroke-width="1"/><rect x="3" y="3" width="11" height="11" fill="#c9e3f8"/><rect x="5" y="5" width="7" height="7" fill="#2a9a7c"/></svg>
<svg style="left:1395.5px;top:131px;" width="17" height="17" viewBox="0 0 17 17"><rect x="0.5" y="0.5" width="16" height="16" fill="#2a9a7c"/><rect x="3.4" y="3.4" width="10.2" height="10.2" fill="none" stroke="#e8e8e8" stroke-width="1.6"/><rect x="6" y="6" width="5" height="5" fill="#2a9a7c"/></svg>
<svg style="left:1418.5px;top:130.5px;" width="18" height="18" viewBox="0 0 18 18"><rect x="4.5" y="4.5" width="9" height="9" fill="none" stroke="#2a9a7c" stroke-width="2.4"/><path d="M6 0 V3.5 M9 0 V3.5 M12 0 V3.5 M6 14.5 V18 M9 14.5 V18 M12 14.5 V18 M0 6 H3.5 M0 9 H3.5 M0 12 H3.5 M14.5 6 H18 M14.5 9 H18 M14.5 12 H18" stroke="#2a9a7c" stroke-width="1.5" stroke-dasharray="1.6 0.9"/></svg>
<svg style="left:1441.5px;top:131.5px;" width="18" height="16" viewBox="0 0 18 16"><path d="M2.5 1 H15 Q16.8 1 16.8 2.8 V10.2 Q16.8 12 15 12 H13.5 L12.5 14.5 L10.5 12 H2.5 Q0.8 12 0.8 10.2 V2.8 Q0.8 1 2.5 1 Z" fill="none" stroke="#2a9a7c" stroke-width="1.5"/><path d="M4.5 5 H13 M6 8.2 H11.5" stroke="#2a9a7c" stroke-width="1.5"/></svg>
<svg style="left:1468px;top:133px;" width="13" height="6" viewBox="0 0 13 6"><rect x="0.75" y="0.75" width="11" height="3.6" rx="1.2" fill="#fff" stroke="#8a8a8a" stroke-width="1.3"/></svg>
<svg style="left:1491.5px;top:133.5px;" width="12" height="12" viewBox="0 0 12 12"><rect x="0.75" y="0.75" width="10" height="10" rx="1" fill="#fff" stroke="#8a8a8a" stroke-width="1.4"/><rect x="0.75" y="0.75" width="10" height="2.4" fill="#8a8a8a"/></svg>
<svg style="left:740px;top:195px;" width="550" height="560" viewBox="0 0 550 560"><path d="M66.89999999999998 58.80000000000001 H484.20000000000005 L488.70000000000005 63.30000000000001 V481.20000000000005 L484.20000000000005 485.70000000000005 H66.89999999999998 L62.39999999999998 481.20000000000005 V63.30000000000001 Z" fill="#808080" stroke="#808080" stroke-width="1" stroke-linejoin="round"/><circle cx="477.5999999999999" cy="69.89999999999998" r="6.3" fill="#0f9aa6" stroke="#7fc4c8" stroke-width="1"/><path d="M462.28 26.69999999999999 V42.900000000000006 M462.28 501 V516.9 M445.14 26.69999999999999 V42.900000000000006 M445.14 501 V516.9 M428.00 26.69999999999999 V42.900000000000006 M428.00 501 V516.9 M410.86 26.69999999999999 V42.900000000000006 M410.86 501 V516.9 M393.72 26.69999999999999 V42.900000000000006 M393.72 501 V516.9 M376.58 26.69999999999999 V42.900000000000006 M376.58 501 V516.9 M359.44 26.69999999999999 V42.900000000000006 M359.44 501 V516.9 M342.30 26.69999999999999 V42.900000000000006 M342.30 501 V516.9 M325.16 26.69999999999999 V42.900000000000006 M325.16 501 V516.9 M308.02 26.69999999999999 V42.900000000000006 M308.02 501 V516.9 M290.88 26.69999999999999 V42.900000000000006 M290.88 501 V516.9 M273.74 26.69999999999999 V42.900000000000006 M273.74 501 V516.9 M256.60 26.69999999999999 V42.900000000000006 M256.60 501 V516.9 M239.46 26.69999999999999 V42.900000000000006 M239.46 501 V516.9 M222.32 26.69999999999999 V42.900000000000006 M222.32 501 V516.9 M205.18 26.69999999999999 V42.900000000000006 M205.18 501 V516.9 M188.04 26.69999999999999 V42.900000000000006 M188.04 501 V516.9 M170.90 26.69999999999999 V42.900000000000006 M170.90 501 V516.9 M153.76 26.69999999999999 V42.900000000000006 M153.76 501 V516.9 M136.62 26.69999999999999 V42.900000000000006 M136.62 501 V516.9 M119.48 26.69999999999999 V42.900000000000006 M119.48 501 V516.9 M102.34 26.69999999999999 V42.900000000000006 M102.34 501 V516.9 M85.20 26.69999999999999 V42.900000000000006 M85.20 501 V516.9 M29.799999999999955 82.40 H46.5 M504 82.40 H520.7 M29.799999999999955 99.49 H46.5 M504 99.49 H520.7 M29.799999999999955 116.58 H46.5 M504 116.58 H520.7 M29.799999999999955 133.67 H46.5 M504 133.67 H520.7 M29.799999999999955 150.76 H46.5 M504 150.76 H520.7 M29.799999999999955 167.85 H46.5 M504 167.85 H520.7 M29.799999999999955 184.94 H46.5 M504 184.94 H520.7 M29.799999999999955 202.03 H46.5 M504 202.03 H520.7 M29.799999999999955 219.12 H46.5 M504 219.12 H520.7 M29.799999999999955 236.21 H46.5 M504 236.21 H520.7 M29.799999999999955 253.30 H46.5 M504 253.30 H520.7 M29.799999999999955 270.39 H46.5 M504 270.39 H520.7 M29.799999999999955 287.48 H46.5 M504 287.48 H520.7 M29.799999999999955 304.57 H46.5 M504 304.57 H520.7 M29.799999999999955 321.66 H46.5 M504 321.66 H520.7 M29.799999999999955 338.75 H46.5 M504 338.75 H520.7 M29.799999999999955 355.84 H46.5 M504 355.84 H520.7 M29.799999999999955 372.93 H46.5 M504 372.93 H520.7 M29.799999999999955 390.02 H46.5 M504 390.02 H520.7 M29.799999999999955 407.11 H46.5 M504 407.11 H520.7 M29.799999999999955 424.20 H46.5 M504 424.20 H520.7 M29.799999999999955 441.29 H46.5 M504 441.29 H520.7 M29.799999999999955 458.38 H46.5 M504 458.38 H520.7" stroke="#2e2e2e" stroke-width="1.25" fill="none"/><g font-size="5" fill="#3a3a3a" text-anchor="middle" font-family="Liberation Sans, sans-serif"><text x="462.3" y="9.699999999999989">1</text><text x="462.3" y="535.5">1</text><text x="445.1" y="9.699999999999989">2</text><text x="445.1" y="535.5">2</text><text x="428.0" y="9.699999999999989">3</text><text x="428.0" y="535.5">3</text><text x="410.9" y="9.699999999999989">4</text><text x="410.9" y="535.5">4</text><text x="393.7" y="9.699999999999989">5</text><text x="393.7" y="535.5">5</text><text x="376.6" y="9.699999999999989">6</text><text x="376.6" y="535.5">6</text><text x="359.4" y="9.699999999999989">7</text><text x="359.4" y="535.5">7</text><text x="342.3" y="9.699999999999989">8</text><text x="342.3" y="535.5">8</text><text x="325.2" y="9.699999999999989">9</text><text x="325.2" y="535.5">9</text><text x="308.0" y="9.699999999999989">10</text><text x="308.0" y="535.5">10</text><text x="290.9" y="9.699999999999989">11</text><text x="290.9" y="535.5">11</text><text x="273.7" y="9.699999999999989">12</text><text x="273.7" y="535.5">12</text><text x="256.6" y="9.699999999999989">13</text><text x="256.6" y="535.5">13</text><text x="239.5" y="9.699999999999989">14</text><text x="239.5" y="535.5">14</text><text x="222.3" y="9.699999999999989">15</text><text x="222.3" y="535.5">15</text><text x="205.2" y="9.699999999999989">16</text><text x="205.2" y="535.5">16</text><text x="188.0" y="9.699999999999989">17</text><text x="188.0" y="535.5">17</text><text x="170.9" y="9.699999999999989">18</text><text x="170.9" y="535.5">18</text><text x="153.8" y="9.699999999999989">19</text><text x="153.8" y="535.5">19</text><text x="136.6" y="9.699999999999989">20</text><text x="136.6" y="535.5">20</text><text x="119.5" y="9.699999999999989">21</text><text x="119.5" y="535.5">21</text><text x="102.3" y="9.699999999999989">22</text><text x="102.3" y="535.5">22</text><text x="85.2" y="9.699999999999989">23</text><text x="85.2" y="535.5">23</text><text x="11.600000000000023" y="81.8">A</text><text x="538.8" y="81.8">A</text><text x="11.600000000000023" y="98.9">B</text><text x="538.8" y="98.9">B</text><text x="11.600000000000023" y="116.0">C</text><text x="538.8" y="116.0">C</text><text x="11.600000000000023" y="133.1">D</text><text x="538.8" y="133.1">D</text><text x="11.600000000000023" y="150.2">E</text><text x="538.8" y="150.2">E</text><text x="11.600000000000023" y="167.2">F</text><text x="538.8" y="167.2">F</text><text x="11.600000000000023" y="184.3">G</text><text x="538.8" y="184.3">G</text><text x="11.600000000000023" y="201.4">H</text><text x="538.8" y="201.4">H</text><text x="11.600000000000023" y="218.5">J</text><text x="538.8" y="218.5">J</text><text x="11.600000000000023" y="235.6">K</text><text x="538.8" y="235.6">K</text><text x="11.600000000000023" y="252.7">L</text><text x="538.8" y="252.7">L</text><text x="11.600000000000023" y="269.8">M</text><text x="538.8" y="269.8">M</text><text x="11.600000000000023" y="286.9">N</text><text x="538.8" y="286.9">N</text><text x="11.600000000000023" y="304.0">P</text><text x="538.8" y="304.0">P</text><text x="11.600000000000023" y="321.1">R</text><text x="538.8" y="321.1">R</text><text x="11.600000000000023" y="338.1">T</text><text x="538.8" y="338.1">T</text><text x="11.600000000000023" y="355.2">U</text><text x="538.8" y="355.2">U</text><text x="11.600000000000023" y="372.3">V</text><text x="538.8" y="372.3">V</text><text x="11.600000000000023" y="389.4">W</text><text x="538.8" y="389.4">W</text><text x="11.600000000000023" y="406.5">Y</text><text x="538.8" y="406.5">Y</text><text x="11.600000000000023" y="423.6">AA</text><text x="538.8" y="423.6">AA</text><text x="11.600000000000023" y="440.7">AB</text><text x="538.8" y="440.7">AB</text><text x="11.600000000000023" y="457.8">AC</text><text x="538.8" y="457.8">AC</text></g><path d="M407.46 79.10h6.8v6.6h-6.8zM373.18 79.10h6.8v6.6h-6.8zM321.76 79.10h6.8v6.6h-6.8zM287.48 79.10h6.8v6.6h-6.8zM201.78 79.10h6.8v6.6h-6.8zM184.64 79.10h6.8v6.6h-6.8zM133.22 79.10h6.8v6.6h-6.8zM116.08 79.10h6.8v6.6h-6.8zM98.94 79.10h6.8v6.6h-6.8zM441.74 96.19h6.8v6.6h-6.8zM407.46 96.19h6.8v6.6h-6.8zM304.62 96.19h6.8v6.6h-6.8zM270.34 96.19h6.8v6.6h-6.8zM253.20 96.19h6.8v6.6h-6.8zM218.92 96.19h6.8v6.6h-6.8zM150.36 96.19h6.8v6.6h-6.8zM133.22 96.19h6.8v6.6h-6.8zM98.94 96.19h6.8v6.6h-6.8zM81.80 96.19h6.8v6.6h-6.8zM441.74 113.28h6.8v6.6h-6.8zM424.60 113.28h6.8v6.6h-6.8zM390.32 113.28h6.8v6.6h-6.8zM373.18 113.28h6.8v6.6h-6.8zM356.04 113.28h6.8v6.6h-6.8zM338.90 113.28h6.8v6.6h-6.8zM304.62 113.28h6.8v6.6h-6.8zM270.34 113.28h6.8v6.6h-6.8zM253.20 113.28h6.8v6.6h-6.8zM218.92 113.28h6.8v6.6h-6.8zM184.64 113.28h6.8v6.6h-6.8zM167.50 113.28h6.8v6.6h-6.8zM150.36 113.28h6.8v6.6h-6.8zM133.22 113.28h6.8v6.6h-6.8zM98.94 113.28h6.8v6.6h-6.8zM81.80 113.28h6.8v6.6h-6.8zM458.88 130.37h6.8v6.6h-6.8zM441.74 130.37h6.8v6.6h-6.8zM424.60 130.37h6.8v6.6h-6.8zM407.46 130.37h6.8v6.6h-6.8zM390.32 130.37h6.8v6.6h-6.8zM373.18 130.37h6.8v6.6h-6.8zM338.90 130.37h6.8v6.6h-6.8zM321.76 130.37h6.8v6.6h-6.8zM304.62 130.37h6.8v6.6h-6.8zM287.48 130.37h6.8v6.6h-6.8zM236.06 130.37h6.8v6.6h-6.8zM201.78 130.37h6.8v6.6h-6.8zM133.22 130.37h6.8v6.6h-6.8zM458.88 147.46h6.8v6.6h-6.8zM424.60 147.46h6.8v6.6h-6.8zM407.46 147.46h6.8v6.6h-6.8zM390.32 147.46h6.8v6.6h-6.8zM373.18 147.46h6.8v6.6h-6.8zM356.04 147.46h6.8v6.6h-6.8zM321.76 147.46h6.8v6.6h-6.8zM287.48 147.46h6.8v6.6h-6.8zM270.34 147.46h6.8v6.6h-6.8zM184.64 147.46h6.8v6.6h-6.8zM167.50 147.46h6.8v6.6h-6.8zM116.08 147.46h6.8v6.6h-6.8zM81.80 147.46h6.8v6.6h-6.8zM458.88 164.55h6.8v6.6h-6.8zM441.74 164.55h6.8v6.6h-6.8zM424.60 164.55h6.8v6.6h-6.8zM407.46 164.55h6.8v6.6h-6.8zM390.32 164.55h6.8v6.6h-6.8zM356.04 164.55h6.8v6.6h-6.8zM338.90 164.55h6.8v6.6h-6.8zM321.76 164.55h6.8v6.6h-6.8zM304.62 164.55h6.8v6.6h-6.8zM236.06 164.55h6.8v6.6h-6.8zM424.60 181.64h6.8v6.6h-6.8zM407.46 181.64h6.8v6.6h-6.8zM270.34 181.64h6.8v6.6h-6.8zM253.20 181.64h6.8v6.6h-6.8zM236.06 181.64h6.8v6.6h-6.8zM218.92 181.64h6.8v6.6h-6.8zM116.08 181.64h6.8v6.6h-6.8zM458.88 198.73h6.8v6.6h-6.8zM441.74 198.73h6.8v6.6h-6.8zM407.46 198.73h6.8v6.6h-6.8zM373.18 198.73h6.8v6.6h-6.8zM356.04 198.73h6.8v6.6h-6.8zM338.90 198.73h6.8v6.6h-6.8zM321.76 198.73h6.8v6.6h-6.8zM253.20 198.73h6.8v6.6h-6.8zM236.06 198.73h6.8v6.6h-6.8zM218.92 198.73h6.8v6.6h-6.8zM150.36 198.73h6.8v6.6h-6.8zM133.22 198.73h6.8v6.6h-6.8zM116.08 198.73h6.8v6.6h-6.8zM98.94 198.73h6.8v6.6h-6.8zM81.80 198.73h6.8v6.6h-6.8zM458.88 215.82h6.8v6.6h-6.8zM424.60 215.82h6.8v6.6h-6.8zM321.76 215.82h6.8v6.6h-6.8zM304.62 215.82h6.8v6.6h-6.8zM287.48 215.82h6.8v6.6h-6.8zM270.34 215.82h6.8v6.6h-6.8zM253.20 215.82h6.8v6.6h-6.8zM236.06 215.82h6.8v6.6h-6.8zM133.22 215.82h6.8v6.6h-6.8zM116.08 215.82h6.8v6.6h-6.8zM98.94 215.82h6.8v6.6h-6.8zM81.80 215.82h6.8v6.6h-6.8zM458.88 232.91h6.8v6.6h-6.8zM441.74 232.91h6.8v6.6h-6.8zM407.46 232.91h6.8v6.6h-6.8zM390.32 232.91h6.8v6.6h-6.8zM373.18 232.91h6.8v6.6h-6.8zM356.04 232.91h6.8v6.6h-6.8zM338.90 232.91h6.8v6.6h-6.8zM304.62 232.91h6.8v6.6h-6.8zM287.48 232.91h6.8v6.6h-6.8zM270.34 232.91h6.8v6.6h-6.8zM253.20 232.91h6.8v6.6h-6.8zM236.06 232.91h6.8v6.6h-6.8zM218.92 232.91h6.8v6.6h-6.8zM201.78 232.91h6.8v6.6h-6.8zM184.64 232.91h6.8v6.6h-6.8zM116.08 232.91h6.8v6.6h-6.8zM98.94 232.91h6.8v6.6h-6.8zM458.88 250.00h6.8v6.6h-6.8zM441.74 250.00h6.8v6.6h-6.8zM424.60 250.00h6.8v6.6h-6.8zM390.32 250.00h6.8v6.6h-6.8zM321.76 250.00h6.8v6.6h-6.8zM304.62 250.00h6.8v6.6h-6.8zM287.48 250.00h6.8v6.6h-6.8zM270.34 250.00h6.8v6.6h-6.8zM253.20 250.00h6.8v6.6h-6.8zM236.06 250.00h6.8v6.6h-6.8zM218.92 250.00h6.8v6.6h-6.8zM201.78 250.00h6.8v6.6h-6.8zM184.64 250.00h6.8v6.6h-6.8zM133.22 250.00h6.8v6.6h-6.8zM98.94 250.00h6.8v6.6h-6.8zM458.88 267.09h6.8v6.6h-6.8zM424.60 267.09h6.8v6.6h-6.8zM407.46 267.09h6.8v6.6h-6.8zM390.32 267.09h6.8v6.6h-6.8zM373.18 267.09h6.8v6.6h-6.8zM356.04 267.09h6.8v6.6h-6.8zM338.90 267.09h6.8v6.6h-6.8zM321.76 267.09h6.8v6.6h-6.8zM304.62 267.09h6.8v6.6h-6.8zM270.34 267.09h6.8v6.6h-6.8zM218.92 267.09h6.8v6.6h-6.8zM184.64 267.09h6.8v6.6h-6.8zM167.50 267.09h6.8v6.6h-6.8zM150.36 267.09h6.8v6.6h-6.8zM116.08 267.09h6.8v6.6h-6.8zM98.94 267.09h6.8v6.6h-6.8zM81.80 267.09h6.8v6.6h-6.8zM441.74 284.18h6.8v6.6h-6.8zM390.32 284.18h6.8v6.6h-6.8zM373.18 284.18h6.8v6.6h-6.8zM356.04 284.18h6.8v6.6h-6.8zM338.90 284.18h6.8v6.6h-6.8zM321.76 284.18h6.8v6.6h-6.8zM304.62 284.18h6.8v6.6h-6.8zM287.48 284.18h6.8v6.6h-6.8zM270.34 284.18h6.8v6.6h-6.8zM253.20 284.18h6.8v6.6h-6.8zM236.06 284.18h6.8v6.6h-6.8zM218.92 284.18h6.8v6.6h-6.8zM201.78 284.18h6.8v6.6h-6.8zM184.64 284.18h6.8v6.6h-6.8zM167.50 284.18h6.8v6.6h-6.8zM133.22 284.18h6.8v6.6h-6.8zM116.08 284.18h6.8v6.6h-6.8zM98.94 284.18h6.8v6.6h-6.8zM458.88 301.27h6.8v6.6h-6.8zM441.74 301.27h6.8v6.6h-6.8zM424.60 301.27h6.8v6.6h-6.8zM373.18 301.27h6.8v6.6h-6.8zM338.90 301.27h6.8v6.6h-6.8zM304.62 301.27h6.8v6.6h-6.8zM287.48 301.27h6.8v6.6h-6.8zM270.34 301.27h6.8v6.6h-6.8zM236.06 301.27h6.8v6.6h-6.8zM218.92 301.27h6.8v6.6h-6.8zM184.64 301.27h6.8v6.6h-6.8zM167.50 301.27h6.8v6.6h-6.8zM133.22 301.27h6.8v6.6h-6.8zM98.94 301.27h6.8v6.6h-6.8zM81.80 301.27h6.8v6.6h-6.8zM458.88 318.36h6.8v6.6h-6.8zM424.60 318.36h6.8v6.6h-6.8zM407.46 318.36h6.8v6.6h-6.8zM338.90 318.36h6.8v6.6h-6.8zM304.62 318.36h6.8v6.6h-6.8zM287.48 318.36h6.8v6.6h-6.8zM253.20 318.36h6.8v6.6h-6.8zM236.06 318.36h6.8v6.6h-6.8zM218.92 318.36h6.8v6.6h-6.8zM184.64 318.36h6.8v6.6h-6.8zM167.50 318.36h6.8v6.6h-6.8zM150.36 318.36h6.8v6.6h-6.8zM81.80 318.36h6.8v6.6h-6.8zM424.60 335.45h6.8v6.6h-6.8zM407.46 335.45h6.8v6.6h-6.8zM390.32 335.45h6.8v6.6h-6.8zM338.90 335.45h6.8v6.6h-6.8zM321.76 335.45h6.8v6.6h-6.8zM304.62 335.45h6.8v6.6h-6.8zM253.20 335.45h6.8v6.6h-6.8zM236.06 335.45h6.8v6.6h-6.8zM201.78 335.45h6.8v6.6h-6.8zM184.64 335.45h6.8v6.6h-6.8zM167.50 335.45h6.8v6.6h-6.8zM133.22 335.45h6.8v6.6h-6.8zM98.94 335.45h6.8v6.6h-6.8zM81.80 335.45h6.8v6.6h-6.8zM441.74 352.54h6.8v6.6h-6.8zM424.60 352.54h6.8v6.6h-6.8zM373.18 352.54h6.8v6.6h-6.8zM287.48 352.54h6.8v6.6h-6.8zM270.34 352.54h6.8v6.6h-6.8zM253.20 352.54h6.8v6.6h-6.8zM236.06 352.54h6.8v6.6h-6.8zM218.92 352.54h6.8v6.6h-6.8zM201.78 352.54h6.8v6.6h-6.8zM98.94 352.54h6.8v6.6h-6.8zM81.80 352.54h6.8v6.6h-6.8zM441.74 369.63h6.8v6.6h-6.8zM424.60 369.63h6.8v6.6h-6.8zM390.32 369.63h6.8v6.6h-6.8zM373.18 369.63h6.8v6.6h-6.8zM356.04 369.63h6.8v6.6h-6.8zM338.90 369.63h6.8v6.6h-6.8zM304.62 369.63h6.8v6.6h-6.8zM287.48 369.63h6.8v6.6h-6.8zM270.34 369.63h6.8v6.6h-6.8zM236.06 369.63h6.8v6.6h-6.8zM218.92 369.63h6.8v6.6h-6.8zM201.78 369.63h6.8v6.6h-6.8zM184.64 369.63h6.8v6.6h-6.8zM98.94 369.63h6.8v6.6h-6.8zM424.60 386.72h6.8v6.6h-6.8zM407.46 386.72h6.8v6.6h-6.8zM390.32 386.72h6.8v6.6h-6.8zM321.76 386.72h6.8v6.6h-6.8zM287.48 386.72h6.8v6.6h-6.8zM253.20 386.72h6.8v6.6h-6.8zM236.06 386.72h6.8v6.6h-6.8zM218.92 386.72h6.8v6.6h-6.8zM184.64 386.72h6.8v6.6h-6.8zM98.94 386.72h6.8v6.6h-6.8zM81.80 386.72h6.8v6.6h-6.8zM441.74 403.81h6.8v6.6h-6.8zM287.48 403.81h6.8v6.6h-6.8zM270.34 403.81h6.8v6.6h-6.8zM236.06 403.81h6.8v6.6h-6.8zM218.92 403.81h6.8v6.6h-6.8zM201.78 403.81h6.8v6.6h-6.8zM184.64 403.81h6.8v6.6h-6.8zM133.22 403.81h6.8v6.6h-6.8zM98.94 403.81h6.8v6.6h-6.8zM81.80 403.81h6.8v6.6h-6.8zM441.74 420.90h6.8v6.6h-6.8zM424.60 420.90h6.8v6.6h-6.8zM407.46 420.90h6.8v6.6h-6.8zM390.32 420.90h6.8v6.6h-6.8zM373.18 420.90h6.8v6.6h-6.8zM338.90 420.90h6.8v6.6h-6.8zM321.76 420.90h6.8v6.6h-6.8zM304.62 420.90h6.8v6.6h-6.8zM287.48 420.90h6.8v6.6h-6.8zM270.34 420.90h6.8v6.6h-6.8zM253.20 420.90h6.8v6.6h-6.8zM236.06 420.90h6.8v6.6h-6.8zM218.92 420.90h6.8v6.6h-6.8zM201.78 420.90h6.8v6.6h-6.8zM98.94 420.90h6.8v6.6h-6.8zM81.80 420.90h6.8v6.6h-6.8zM458.88 437.99h6.8v6.6h-6.8zM441.74 437.99h6.8v6.6h-6.8zM424.60 437.99h6.8v6.6h-6.8zM407.46 437.99h6.8v6.6h-6.8zM373.18 437.99h6.8v6.6h-6.8zM356.04 437.99h6.8v6.6h-6.8zM338.90 437.99h6.8v6.6h-6.8zM321.76 437.99h6.8v6.6h-6.8zM304.62 437.99h6.8v6.6h-6.8zM270.34 437.99h6.8v6.6h-6.8zM184.64 437.99h6.8v6.6h-6.8zM150.36 437.99h6.8v6.6h-6.8zM133.22 437.99h6.8v6.6h-6.8zM116.08 437.99h6.8v6.6h-6.8zM81.80 437.99h6.8v6.6h-6.8zM441.74 455.08h6.8v6.6h-6.8zM424.60 455.08h6.8v6.6h-6.8zM407.46 455.08h6.8v6.6h-6.8zM390.32 455.08h6.8v6.6h-6.8zM321.76 455.08h6.8v6.6h-6.8zM287.48 455.08h6.8v6.6h-6.8zM201.78 455.08h6.8v6.6h-6.8zM184.64 455.08h6.8v6.6h-6.8zM167.50 455.08h6.8v6.6h-6.8zM133.22 455.08h6.8v6.6h-6.8zM116.08 455.08h6.8v6.6h-6.8zM98.94 455.08h6.8v6.6h-6.8z" fill="#d6d6d6"/><path d="M441.74 79.10h6.8v6.6h-6.8zM424.60 79.10h6.8v6.6h-6.8zM390.32 79.10h6.8v6.6h-6.8zM356.04 79.10h6.8v6.6h-6.8zM338.90 79.10h6.8v6.6h-6.8zM304.62 79.10h6.8v6.6h-6.8zM270.34 79.10h6.8v6.6h-6.8zM218.92 79.10h6.8v6.6h-6.8zM167.50 79.10h6.8v6.6h-6.8zM150.36 79.10h6.8v6.6h-6.8zM458.88 96.19h6.8v6.6h-6.8zM424.60 96.19h6.8v6.6h-6.8zM390.32 96.19h6.8v6.6h-6.8zM373.18 96.19h6.8v6.6h-6.8zM356.04 96.19h6.8v6.6h-6.8zM321.76 96.19h6.8v6.6h-6.8zM287.48 96.19h6.8v6.6h-6.8zM236.06 96.19h6.8v6.6h-6.8zM201.78 96.19h6.8v6.6h-6.8zM184.64 96.19h6.8v6.6h-6.8zM167.50 96.19h6.8v6.6h-6.8zM116.08 96.19h6.8v6.6h-6.8zM458.88 113.28h6.8v6.6h-6.8zM407.46 113.28h6.8v6.6h-6.8zM321.76 113.28h6.8v6.6h-6.8zM287.48 113.28h6.8v6.6h-6.8zM236.06 113.28h6.8v6.6h-6.8zM201.78 113.28h6.8v6.6h-6.8zM116.08 113.28h6.8v6.6h-6.8zM356.04 130.37h6.8v6.6h-6.8zM270.34 130.37h6.8v6.6h-6.8zM253.20 130.37h6.8v6.6h-6.8zM218.92 130.37h6.8v6.6h-6.8zM184.64 130.37h6.8v6.6h-6.8zM167.50 130.37h6.8v6.6h-6.8zM150.36 130.37h6.8v6.6h-6.8zM116.08 130.37h6.8v6.6h-6.8zM98.94 130.37h6.8v6.6h-6.8zM81.80 130.37h6.8v6.6h-6.8zM441.74 147.46h6.8v6.6h-6.8zM338.90 147.46h6.8v6.6h-6.8zM304.62 147.46h6.8v6.6h-6.8zM253.20 147.46h6.8v6.6h-6.8zM236.06 147.46h6.8v6.6h-6.8zM218.92 147.46h6.8v6.6h-6.8zM201.78 147.46h6.8v6.6h-6.8zM150.36 147.46h6.8v6.6h-6.8zM133.22 147.46h6.8v6.6h-6.8zM98.94 147.46h6.8v6.6h-6.8zM373.18 164.55h6.8v6.6h-6.8zM287.48 164.55h6.8v6.6h-6.8zM270.34 164.55h6.8v6.6h-6.8zM253.20 164.55h6.8v6.6h-6.8zM218.92 164.55h6.8v6.6h-6.8zM201.78 164.55h6.8v6.6h-6.8zM184.64 164.55h6.8v6.6h-6.8zM167.50 164.55h6.8v6.6h-6.8zM150.36 164.55h6.8v6.6h-6.8zM133.22 164.55h6.8v6.6h-6.8zM116.08 164.55h6.8v6.6h-6.8zM98.94 164.55h6.8v6.6h-6.8zM81.80 164.55h6.8v6.6h-6.8zM458.88 181.64h6.8v6.6h-6.8zM441.74 181.64h6.8v6.6h-6.8zM390.32 181.64h6.8v6.6h-6.8zM373.18 181.64h6.8v6.6h-6.8zM356.04 181.64h6.8v6.6h-6.8zM321.76 181.64h6.8v6.6h-6.8zM287.48 181.64h6.8v6.6h-6.8zM184.64 181.64h6.8v6.6h-6.8zM167.50 181.64h6.8v6.6h-6.8zM150.36 181.64h6.8v6.6h-6.8zM133.22 181.64h6.8v6.6h-6.8zM98.94 181.64h6.8v6.6h-6.8zM81.80 181.64h6.8v6.6h-6.8zM424.60 198.73h6.8v6.6h-6.8zM390.32 198.73h6.8v6.6h-6.8zM304.62 198.73h6.8v6.6h-6.8zM287.48 198.73h6.8v6.6h-6.8zM270.34 198.73h6.8v6.6h-6.8zM184.64 198.73h6.8v6.6h-6.8zM167.50 198.73h6.8v6.6h-6.8zM441.74 215.82h6.8v6.6h-6.8zM407.46 215.82h6.8v6.6h-6.8zM390.32 215.82h6.8v6.6h-6.8zM373.18 215.82h6.8v6.6h-6.8zM356.04 215.82h6.8v6.6h-6.8zM338.90 215.82h6.8v6.6h-6.8zM218.92 215.82h6.8v6.6h-6.8zM201.78 215.82h6.8v6.6h-6.8zM184.64 215.82h6.8v6.6h-6.8zM167.50 215.82h6.8v6.6h-6.8zM150.36 215.82h6.8v6.6h-6.8zM424.60 232.91h6.8v6.6h-6.8zM321.76 232.91h6.8v6.6h-6.8zM167.50 232.91h6.8v6.6h-6.8zM150.36 232.91h6.8v6.6h-6.8zM133.22 232.91h6.8v6.6h-6.8zM81.80 232.91h6.8v6.6h-6.8zM407.46 250.00h6.8v6.6h-6.8zM356.04 250.00h6.8v6.6h-6.8zM338.90 250.00h6.8v6.6h-6.8zM167.50 250.00h6.8v6.6h-6.8zM150.36 250.00h6.8v6.6h-6.8zM116.08 250.00h6.8v6.6h-6.8zM81.80 250.00h6.8v6.6h-6.8zM441.74 267.09h6.8v6.6h-6.8zM287.48 267.09h6.8v6.6h-6.8zM253.20 267.09h6.8v6.6h-6.8zM236.06 267.09h6.8v6.6h-6.8zM201.78 267.09h6.8v6.6h-6.8zM133.22 267.09h6.8v6.6h-6.8zM458.88 284.18h6.8v6.6h-6.8zM424.60 284.18h6.8v6.6h-6.8zM407.46 284.18h6.8v6.6h-6.8zM81.80 284.18h6.8v6.6h-6.8zM407.46 301.27h6.8v6.6h-6.8zM390.32 301.27h6.8v6.6h-6.8zM356.04 301.27h6.8v6.6h-6.8zM321.76 301.27h6.8v6.6h-6.8zM253.20 301.27h6.8v6.6h-6.8zM201.78 301.27h6.8v6.6h-6.8zM150.36 301.27h6.8v6.6h-6.8zM116.08 301.27h6.8v6.6h-6.8zM441.74 318.36h6.8v6.6h-6.8zM390.32 318.36h6.8v6.6h-6.8zM373.18 318.36h6.8v6.6h-6.8zM356.04 318.36h6.8v6.6h-6.8zM321.76 318.36h6.8v6.6h-6.8zM270.34 318.36h6.8v6.6h-6.8zM201.78 318.36h6.8v6.6h-6.8zM133.22 318.36h6.8v6.6h-6.8zM116.08 318.36h6.8v6.6h-6.8zM98.94 318.36h6.8v6.6h-6.8zM458.88 335.45h6.8v6.6h-6.8zM441.74 335.45h6.8v6.6h-6.8zM373.18 335.45h6.8v6.6h-6.8zM356.04 335.45h6.8v6.6h-6.8zM287.48 335.45h6.8v6.6h-6.8zM270.34 335.45h6.8v6.6h-6.8zM218.92 335.45h6.8v6.6h-6.8zM150.36 335.45h6.8v6.6h-6.8zM116.08 335.45h6.8v6.6h-6.8zM458.88 352.54h6.8v6.6h-6.8zM407.46 352.54h6.8v6.6h-6.8zM390.32 352.54h6.8v6.6h-6.8zM356.04 352.54h6.8v6.6h-6.8zM338.90 352.54h6.8v6.6h-6.8zM321.76 352.54h6.8v6.6h-6.8zM304.62 352.54h6.8v6.6h-6.8zM184.64 352.54h6.8v6.6h-6.8zM167.50 352.54h6.8v6.6h-6.8zM150.36 352.54h6.8v6.6h-6.8zM133.22 352.54h6.8v6.6h-6.8zM116.08 352.54h6.8v6.6h-6.8zM458.88 369.63h6.8v6.6h-6.8zM407.46 369.63h6.8v6.6h-6.8zM321.76 369.63h6.8v6.6h-6.8zM253.20 369.63h6.8v6.6h-6.8zM167.50 369.63h6.8v6.6h-6.8zM150.36 369.63h6.8v6.6h-6.8zM133.22 369.63h6.8v6.6h-6.8zM116.08 369.63h6.8v6.6h-6.8zM81.80 369.63h6.8v6.6h-6.8zM458.88 386.72h6.8v6.6h-6.8zM441.74 386.72h6.8v6.6h-6.8zM373.18 386.72h6.8v6.6h-6.8zM356.04 386.72h6.8v6.6h-6.8zM338.90 386.72h6.8v6.6h-6.8zM304.62 386.72h6.8v6.6h-6.8zM270.34 386.72h6.8v6.6h-6.8zM201.78 386.72h6.8v6.6h-6.8zM167.50 386.72h6.8v6.6h-6.8zM150.36 386.72h6.8v6.6h-6.8zM133.22 386.72h6.8v6.6h-6.8zM116.08 386.72h6.8v6.6h-6.8zM458.88 403.81h6.8v6.6h-6.8zM424.60 403.81h6.8v6.6h-6.8zM407.46 403.81h6.8v6.6h-6.8zM390.32 403.81h6.8v6.6h-6.8zM373.18 403.81h6.8v6.6h-6.8zM356.04 403.81h6.8v6.6h-6.8zM338.90 403.81h6.8v6.6h-6.8zM321.76 403.81h6.8v6.6h-6.8zM304.62 403.81h6.8v6.6h-6.8zM167.50 403.81h6.8v6.6h-6.8zM150.36 403.81h6.8v6.6h-6.8zM116.08 403.81h6.8v6.6h-6.8zM458.88 420.90h6.8v6.6h-6.8zM356.04 420.90h6.8v6.6h-6.8zM184.64 420.90h6.8v6.6h-6.8zM167.50 420.90h6.8v6.6h-6.8zM150.36 420.90h6.8v6.6h-6.8zM133.22 420.90h6.8v6.6h-6.8zM116.08 420.90h6.8v6.6h-6.8zM390.32 437.99h6.8v6.6h-6.8zM287.48 437.99h6.8v6.6h-6.8zM236.06 437.99h6.8v6.6h-6.8zM218.92 437.99h6.8v6.6h-6.8zM201.78 437.99h6.8v6.6h-6.8zM167.50 437.99h6.8v6.6h-6.8zM98.94 437.99h6.8v6.6h-6.8zM373.18 455.08h6.8v6.6h-6.8zM356.04 455.08h6.8v6.6h-6.8zM338.90 455.08h6.8v6.6h-6.8zM304.62 455.08h6.8v6.6h-6.8zM270.34 455.08h6.8v6.6h-6.8zM236.06 455.08h6.8v6.6h-6.8zM218.92 455.08h6.8v6.6h-6.8zM150.36 455.08h6.8v6.6h-6.8z" fill="#f4f4f4"/><path d="M253.20 79.10h6.8v6.6h-6.8zM236.06 79.10h6.8v6.6h-6.8zM338.90 181.64h6.8v6.6h-6.8zM304.62 181.64h6.8v6.6h-6.8zM150.36 284.18h6.8v6.6h-6.8z" fill="#00f000"/><path d="M338.90 96.19h6.8v6.6h-6.8z" fill="#f00000"/><g font-size="4.8" font-weight="bold" fill="#222" text-anchor="middle" font-family="Liberation Sans, sans-serif"><text x="462.3" y="107.7">B1</text><text x="445.1" y="107.7">B2</text><text x="428.0" y="107.7">B3</text><text x="410.9" y="107.7">B4</text><text x="393.7" y="107.7">B5</text><text x="376.6" y="107.7">B6</text><text x="359.4" y="107.7">B7</text><text x="342.3" y="107.7">B8</text><text x="325.2" y="107.7">B9</text><text x="308.0" y="107.7">B10</text><text x="290.9" y="107.7">B11</text><text x="273.7" y="107.7">B12</text><text x="256.6" y="107.7">B13</text><text x="239.5" y="107.7">B14</text><text x="222.3" y="107.7">B15</text><text x="205.2" y="107.7">B16</text><text x="188.0" y="107.7">B17</text><text x="170.9" y="107.7">B18</text><text x="153.8" y="107.7">B19</text><text x="136.6" y="107.7">B20</text><text x="119.5" y="107.7">B21</text><text x="102.3" y="107.7">B22</text><text x="85.2" y="107.7">B23</text><text x="462.3" y="124.8">C1</text><text x="445.1" y="124.8">C2</text><text x="428.0" y="124.8">C3</text><text x="410.9" y="124.8">C4</text><text x="393.7" y="124.8">C5</text><text x="376.6" y="124.8">C6</text><text x="359.4" y="124.8">C7</text><text x="342.3" y="124.8">C8</text><text x="325.2" y="124.8">C9</text><text x="308.0" y="124.8">C10</text><text x="290.9" y="124.8">C11</text><text x="273.7" y="124.8">C12</text><text x="256.6" y="124.8">C13</text><text x="239.5" y="124.8">C14</text><text x="222.3" y="124.8">C15</text><text x="205.2" y="124.8">C16</text><text x="188.0" y="124.8">C17</text><text x="170.9" y="124.8">C18</text><text x="153.8" y="124.8">C19</text><text x="136.6" y="124.8">C20</text><text x="119.5" y="124.8">C21</text><text x="102.3" y="124.8">C22</text><text x="85.2" y="124.8">C23</text><text x="462.3" y="159.0">E1</text><text x="445.1" y="159.0">E2</text><text x="428.0" y="159.0">E3</text><text x="410.9" y="159.0">E4</text><text x="393.7" y="159.0">E5</text><text x="376.6" y="159.0">E6</text><text x="359.4" y="159.0">E7</text><text x="342.3" y="159.0">E8</text><text x="325.2" y="159.0">E9</text><text x="308.0" y="159.0">E10</text><text x="290.9" y="159.0">E11</text><text x="273.7" y="159.0">E12</text><text x="256.6" y="159.0">E13</text><text x="239.5" y="159.0">E14</text><text x="222.3" y="159.0">E15</text><text x="205.2" y="159.0">E16</text><text x="188.0" y="159.0">E17</text><text x="170.9" y="159.0">E18</text><text x="153.8" y="159.0">E19</text><text x="136.6" y="159.0">E20</text><text x="119.5" y="159.0">E21</text><text x="102.3" y="159.0">E22</text><text x="85.2" y="159.0">E23</text><text x="462.3" y="176.0">F1</text><text x="445.1" y="176.0">F2</text><text x="428.0" y="176.0">F3</text><text x="410.9" y="176.0">F4</text><text x="393.7" y="176.0">F5</text><text x="376.6" y="176.0">F6</text><text x="359.4" y="176.0">F7</text><text x="342.3" y="176.0">F8</text><text x="325.2" y="176.0">F9</text><text x="308.0" y="176.0">F10</text><text x="290.9" y="176.0">F11</text><text x="273.7" y="176.0">F12</text><text x="256.6" y="176.0">F13</text><text x="239.5" y="176.0">F14</text><text x="222.3" y="176.0">F15</text><text x="205.2" y="176.0">F16</text><text x="188.0" y="176.0">F17</text><text x="170.9" y="176.0">F18</text><text x="153.8" y="176.0">F19</text><text x="136.6" y="176.0">F20</text><text x="119.5" y="176.0">F21</text><text x="102.3" y="176.0">F22</text><text x="85.2" y="176.0">F23</text><text x="462.3" y="210.2">H1</text><text x="445.1" y="210.2">H2</text><text x="428.0" y="210.2">H3</text><text x="410.9" y="210.2">H4</text><text x="393.7" y="210.2">H5</text><text x="376.6" y="210.2">H6</text><text x="359.4" y="210.2">H7</text><text x="342.3" y="210.2">H8</text><text x="325.2" y="210.2">H9</text><text x="308.0" y="210.2">H10</text><text x="290.9" y="210.2">H11</text><text x="273.7" y="210.2">H12</text><text x="256.6" y="210.2">H13</text><text x="239.5" y="210.2">H14</text><text x="222.3" y="210.2">H15</text><text x="188.0" y="210.2">H17</text><text x="170.9" y="210.2">H18</text><text x="153.8" y="210.2">H19</text><text x="136.6" y="210.2">H20</text><text x="119.5" y="210.2">H21</text><text x="102.3" y="210.2">H22</text><text x="85.2" y="210.2">H23</text><text x="462.3" y="244.4">K1</text><text x="445.1" y="244.4">K2</text><text x="428.0" y="244.4">K3</text><text x="410.9" y="244.4">K4</text><text x="393.7" y="244.4">K5</text><text x="376.6" y="244.4">K6</text><text x="359.4" y="244.4">K7</text><text x="342.3" y="244.4">K8</text><text x="325.2" y="244.4">K9</text><text x="308.0" y="244.4">K10</text><text x="290.9" y="244.4">K11</text><text x="273.7" y="244.4">K12</text><text x="256.6" y="244.4">K13</text><text x="239.5" y="244.4">K14</text><text x="222.3" y="244.4">K15</text><text x="205.2" y="244.4">K16</text><text x="188.0" y="244.4">K17</text><text x="170.9" y="244.4">K18</text><text x="153.8" y="244.4">K19</text><text x="136.6" y="244.4">K20</text><text x="119.5" y="244.4">K21</text><text x="102.3" y="244.4">K22</text><text x="85.2" y="244.4">K23</text><text x="462.3" y="261.5">L1</text><text x="445.1" y="261.5">L2</text><text x="428.0" y="261.5">L3</text><text x="410.9" y="261.5">L4</text><text x="393.7" y="261.5">L5</text><text x="359.4" y="261.5">L7</text><text x="342.3" y="261.5">L8</text><text x="325.2" y="261.5">L9</text><text x="308.0" y="261.5">L10</text><text x="290.9" y="261.5">L11</text><text x="273.7" y="261.5">L12</text><text x="256.6" y="261.5">L13</text><text x="239.5" y="261.5">L14</text><text x="222.3" y="261.5">L15</text><text x="205.2" y="261.5">L16</text><text x="188.0" y="261.5">L17</text><text x="170.9" y="261.5">L18</text><text x="153.8" y="261.5">L19</text><text x="136.6" y="261.5">L20</text><text x="119.5" y="261.5">L21</text><text x="102.3" y="261.5">L22</text><text x="85.2" y="261.5">L23</text><text x="462.3" y="295.7">N1</text><text x="445.1" y="295.7">N2</text><text x="428.0" y="295.7">N3</text><text x="410.9" y="295.7">N4</text><text x="393.7" y="295.7">N5</text><text x="376.6" y="295.7">N6</text><text x="359.4" y="295.7">N7</text><text x="342.3" y="295.7">N8</text><text x="325.2" y="295.7">N9</text><text x="308.0" y="295.7">N10</text><text x="290.9" y="295.7">N11</text><text x="273.7" y="295.7">N12</text><text x="256.6" y="295.7">N13</text><text x="239.5" y="295.7">N14</text><text x="222.3" y="295.7">N15</text><text x="205.2" y="295.7">N16</text><text x="188.0" y="295.7">N17</text><text x="170.9" y="295.7">N18</text><text x="153.8" y="295.7">N19</text><text x="136.6" y="295.7">N20</text><text x="119.5" y="295.7">N21</text><text x="102.3" y="295.7">N22</text><text x="85.2" y="295.7">N23</text><text x="462.3" y="312.8">P1</text><text x="445.1" y="312.8">P2</text><text x="428.0" y="312.8">P3</text><text x="410.9" y="312.8">P4</text><text x="393.7" y="312.8">P5</text><text x="376.6" y="312.8">P6</text><text x="359.4" y="312.8">P7</text><text x="342.3" y="312.8">P8</text><text x="325.2" y="312.8">P9</text><text x="308.0" y="312.8">P10</text><text x="290.9" y="312.8">P11</text><text x="273.7" y="312.8">P12</text><text x="256.6" y="312.8">P13</text><text x="239.5" y="312.8">P14</text><text x="222.3" y="312.8">P15</text><text x="205.2" y="312.8">P16</text><text x="188.0" y="312.8">P17</text><text x="170.9" y="312.8">P18</text><text x="153.8" y="312.8">P19</text><text x="136.6" y="312.8">P20</text><text x="119.5" y="312.8">P21</text><text x="102.3" y="312.8">P22</text><text x="85.2" y="312.8">P23</text><text x="462.3" y="346.9">T1</text><text x="445.1" y="346.9">T2</text><text x="428.0" y="346.9">T3</text><text x="410.9" y="346.9">T4</text><text x="393.7" y="346.9">T5</text><text x="376.6" y="346.9">T6</text><text x="359.4" y="346.9">T7</text><text x="342.3" y="346.9">T8</text><text x="325.2" y="346.9">T9</text><text x="308.0" y="346.9">T10</text><text x="290.9" y="346.9">T11</text><text x="273.7" y="346.9">T12</text><text x="256.6" y="346.9">T13</text><text x="239.5" y="346.9">T14</text><text x="222.3" y="346.9">T15</text><text x="205.2" y="346.9">T16</text><text x="188.0" y="346.9">T17</text><text x="170.9" y="346.9">T18</text><text x="153.8" y="346.9">T19</text><text x="136.6" y="346.9">T20</text><text x="119.5" y="346.9">T21</text><text x="102.3" y="346.9">T22</text><text x="85.2" y="346.9">T23</text><text x="462.3" y="398.2">W1</text><text x="445.1" y="398.2">W2</text><text x="428.0" y="398.2">W3</text><text x="410.9" y="398.2">W4</text><text x="393.7" y="398.2">W5</text><text x="376.6" y="398.2">W6</text><text x="359.4" y="398.2">W7</text><text x="342.3" y="398.2">W8</text><text x="325.2" y="398.2">W9</text><text x="308.0" y="398.2">W10</text><text x="290.9" y="398.2">W11</text><text x="273.7" y="398.2">W12</text><text x="256.6" y="398.2">W13</text><text x="239.5" y="398.2">W14</text><text x="222.3" y="398.2">W15</text><text x="205.2" y="398.2">W16</text><text x="188.0" y="398.2">W17</text><text x="170.9" y="398.2">W18</text><text x="153.8" y="398.2">W19</text><text x="136.6" y="398.2">W20</text><text x="119.5" y="398.2">W21</text><text x="102.3" y="398.2">W22</text><text x="85.2" y="398.2">W23</text><text x="462.3" y="432.4">AA1</text><text x="445.1" y="432.4">AA2</text><text x="428.0" y="432.4">AA3</text><text x="410.9" y="432.4">AA4</text><text x="393.7" y="432.4">AA5</text><text x="376.6" y="432.4">AA6</text><text x="359.4" y="432.4">AA7</text><text x="342.3" y="432.4">AA8</text><text x="325.2" y="432.4">AA9</text><text x="308.0" y="432.4">AA10</text><text x="290.9" y="432.4">AA11</text><text x="273.7" y="432.4">AA12</text><text x="256.6" y="432.4">AA13</text><text x="239.5" y="432.4">AA14</text><text x="222.3" y="432.4">AA15</text><text x="205.2" y="432.4">AA16</text><text x="188.0" y="432.4">AA17</text><text x="170.9" y="432.4">AA18</text><text x="153.8" y="432.4">AA19</text><text x="136.6" y="432.4">AA20</text><text x="119.5" y="432.4">AA21</text><text x="102.3" y="432.4">AA22</text><text x="85.2" y="432.4">AA23</text><text x="462.3" y="449.5">AB1</text><text x="445.1" y="449.5">AB2</text><text x="428.0" y="449.5">AB3</text><text x="410.9" y="449.5">AB4</text><text x="393.7" y="449.5">AB5</text><text x="376.6" y="449.5">AB6</text><text x="359.4" y="449.5">AB7</text><text x="342.3" y="449.5">AB8</text><text x="325.2" y="449.5">AB9</text><text x="308.0" y="449.5">AB10</text><text x="290.9" y="449.5">AB11</text><text x="273.7" y="449.5">AB12</text><text x="239.5" y="449.5">AB14</text><text x="222.3" y="449.5">AB15</text><text x="205.2" y="449.5">AB16</text><text x="188.0" y="449.5">AB17</text><text x="170.9" y="449.5">AB18</text><text x="153.8" y="449.5">AB19</text><text x="136.6" y="449.5">AB20</text><text x="119.5" y="449.5">AB21</text><text x="102.3" y="449.5">AB22</text><text x="85.2" y="449.5">AB23</text></g><g font-size="4" font-weight="bold" fill="#2a2a2a" text-anchor="middle" font-family="Liberation Sans, sans-serif"><text x="445.1" y="89.7">A2</text><text x="428.0" y="89.7">A3</text><text x="410.9" y="89.7">A4</text><text x="393.7" y="89.7">A5</text><text x="376.6" y="89.7">A6</text><text x="359.4" y="89.7">A7</text><text x="342.3" y="89.7">A8</text><text x="325.2" y="89.7">A9</text><text x="308.0" y="89.7">A10</text><text x="290.9" y="89.7">A11</text><text x="273.7" y="89.7">A12</text><text x="256.6" y="89.7">A13</text><text x="239.5" y="89.7">A14</text><text x="222.3" y="89.7">A15</text><text x="205.2" y="89.7">A16</text><text x="188.0" y="89.7">A17</text><text x="170.9" y="89.7">A18</text><text x="153.8" y="89.7">A19</text><text x="136.6" y="89.7">A20</text><text x="119.5" y="89.7">A21</text><text x="102.3" y="89.7">A22</text><text x="462.3" y="141.0">D1</text><text x="445.1" y="141.0">D2</text><text x="428.0" y="141.0">D3</text><text x="410.9" y="141.0">D4</text><text x="393.7" y="141.0">D5</text><text x="376.6" y="141.0">D6</text><text x="359.4" y="141.0">D7</text><text x="342.3" y="141.0">D8</text><text x="325.2" y="141.0">D9</text><text x="308.0" y="141.0">D10</text><text x="290.9" y="141.0">D11</text><text x="273.7" y="141.0">D12</text><text x="256.6" y="141.0">D13</text><text x="239.5" y="141.0">D14</text><text x="222.3" y="141.0">D15</text><text x="205.2" y="141.0">D16</text><text x="188.0" y="141.0">D17</text><text x="170.9" y="141.0">D18</text><text x="153.8" y="141.0">D19</text><text x="136.6" y="141.0">D20</text><text x="119.5" y="141.0">D21</text><text x="102.3" y="141.0">D22</text><text x="85.2" y="141.0">D23</text><text x="462.3" y="192.2">G1</text><text x="445.1" y="192.2">G2</text><text x="428.0" y="192.2">G3</text><text x="410.9" y="192.2">G4</text><text x="393.7" y="192.2">G5</text><text x="376.6" y="192.2">G6</text><text x="359.4" y="192.2">G7</text><text x="342.3" y="192.2">G8</text><text x="325.2" y="192.2">G9</text><text x="308.0" y="192.2">G10</text><text x="290.9" y="192.2">G11</text><text x="273.7" y="192.2">G12</text><text x="256.6" y="192.2">G13</text><text x="239.5" y="192.2">G14</text><text x="222.3" y="192.2">G15</text><text x="188.0" y="192.2">G17</text><text x="170.9" y="192.2">G18</text><text x="153.8" y="192.2">G19</text><text x="136.6" y="192.2">G20</text><text x="119.5" y="192.2">G21</text><text x="102.3" y="192.2">G22</text><text x="85.2" y="192.2">G23</text><text x="462.3" y="226.4">J1</text><text x="445.1" y="226.4">J2</text><text x="428.0" y="226.4">J3</text><text x="410.9" y="226.4">J4</text><text x="393.7" y="226.4">J5</text><text x="376.6" y="226.4">J6</text><text x="359.4" y="226.4">J7</text><text x="342.3" y="226.4">J8</text><text x="325.2" y="226.4">J9</text><text x="308.0" y="226.4">J10</text><text x="290.9" y="226.4">J11</text><text x="273.7" y="226.4">J12</text><text x="256.6" y="226.4">J13</text><text x="239.5" y="226.4">J14</text><text x="222.3" y="226.4">J15</text><text x="205.2" y="226.4">J16</text><text x="188.0" y="226.4">J17</text><text x="170.9" y="226.4">J18</text><text x="153.8" y="226.4">J19</text><text x="136.6" y="226.4">J20</text><text x="119.5" y="226.4">J21</text><text x="102.3" y="226.4">J22</text><text x="85.2" y="226.4">J23</text><text x="462.3" y="277.7">M1</text><text x="445.1" y="277.7">M2</text><text x="428.0" y="277.7">M3</text><text x="410.9" y="277.7">M4</text><text x="393.7" y="277.7">M5</text><text x="376.6" y="277.7">M6</text><text x="359.4" y="277.7">M7</text><text x="342.3" y="277.7">M8</text><text x="325.2" y="277.7">M9</text><text x="308.0" y="277.7">M10</text><text x="290.9" y="277.7">M11</text><text x="273.7" y="277.7">M12</text><text x="256.6" y="277.7">M13</text><text x="239.5" y="277.7">M14</text><text x="222.3" y="277.7">M15</text><text x="205.2" y="277.7">M16</text><text x="188.0" y="277.7">M17</text><text x="170.9" y="277.7">M18</text><text x="153.8" y="277.7">M19</text><text x="136.6" y="277.7">M20</text><text x="119.5" y="277.7">M21</text><text x="102.3" y="277.7">M22</text><text x="85.2" y="277.7">M23</text><text x="462.3" y="329.0">R1</text><text x="445.1" y="329.0">R2</text><text x="428.0" y="329.0">R3</text><text x="410.9" y="329.0">R4</text><text x="393.7" y="329.0">R5</text><text x="376.6" y="329.0">R6</text><text x="359.4" y="329.0">R7</text><text x="342.3" y="329.0">R8</text><text x="325.2" y="329.0">R9</text><text x="308.0" y="329.0">R10</text><text x="290.9" y="329.0">R11</text><text x="273.7" y="329.0">R12</text><text x="256.6" y="329.0">R13</text><text x="239.5" y="329.0">R14</text><text x="222.3" y="329.0">R15</text><text x="205.2" y="329.0">R16</text><text x="188.0" y="329.0">R17</text><text x="170.9" y="329.0">R18</text><text x="153.8" y="329.0">R19</text><text x="136.6" y="329.0">R20</text><text x="119.5" y="329.0">R21</text><text x="102.3" y="329.0">R22</text><text x="85.2" y="329.0">R23</text><text x="462.3" y="363.1">U1</text><text x="445.1" y="363.1">U2</text><text x="428.0" y="363.1">U3</text><text x="410.9" y="363.1">U4</text><text x="393.7" y="363.1">U5</text><text x="376.6" y="363.1">U6</text><text x="359.4" y="363.1">U7</text><text x="342.3" y="363.1">U8</text><text x="325.2" y="363.1">U9</text><text x="308.0" y="363.1">U10</text><text x="290.9" y="363.1">U11</text><text x="273.7" y="363.1">U12</text><text x="256.6" y="363.1">U13</text><text x="239.5" y="363.1">U14</text><text x="222.3" y="363.1">U15</text><text x="205.2" y="363.1">U16</text><text x="188.0" y="363.1">U17</text><text x="170.9" y="363.1">U18</text><text x="153.8" y="363.1">U19</text><text x="136.6" y="363.1">U20</text><text x="119.5" y="363.1">U21</text><text x="102.3" y="363.1">U22</text><text x="85.2" y="363.1">U23</text><text x="462.3" y="380.2">V1</text><text x="445.1" y="380.2">V2</text><text x="428.0" y="380.2">V3</text><text x="410.9" y="380.2">V4</text><text x="393.7" y="380.2">V5</text><text x="376.6" y="380.2">V6</text><text x="359.4" y="380.2">V7</text><text x="342.3" y="380.2">V8</text><text x="325.2" y="380.2">V9</text><text x="308.0" y="380.2">V10</text><text x="290.9" y="380.2">V11</text><text x="273.7" y="380.2">V12</text><text x="256.6" y="380.2">V13</text><text x="239.5" y="380.2">V14</text><text x="222.3" y="380.2">V15</text><text x="205.2" y="380.2">V16</text><text x="188.0" y="380.2">V17</text><text x="170.9" y="380.2">V18</text><text x="153.8" y="380.2">V19</text><text x="136.6" y="380.2">V20</text><text x="119.5" y="380.2">V21</text><text x="102.3" y="380.2">V22</text><text x="85.2" y="380.2">V23</text><text x="462.3" y="414.4">Y1</text><text x="445.1" y="414.4">Y2</text><text x="428.0" y="414.4">Y3</text><text x="410.9" y="414.4">Y4</text><text x="393.7" y="414.4">Y5</text><text x="376.6" y="414.4">Y6</text><text x="359.4" y="414.4">Y7</text><text x="342.3" y="414.4">Y8</text><text x="325.2" y="414.4">Y9</text><text x="308.0" y="414.4">Y10</text><text x="290.9" y="414.4">Y11</text><text x="273.7" y="414.4">Y12</text><text x="239.5" y="414.4">Y14</text><text x="222.3" y="414.4">Y15</text><text x="205.2" y="414.4">Y16</text><text x="188.0" y="414.4">Y17</text><text x="170.9" y="414.4">Y18</text><text x="153.8" y="414.4">Y19</text><text x="136.6" y="414.4">Y20</text><text x="119.5" y="414.4">Y21</text><text x="102.3" y="414.4">Y22</text><text x="85.2" y="414.4">Y23</text><text x="445.1" y="465.7">AC2</text><text x="428.0" y="465.7">AC3</text><text x="410.9" y="465.7">AC4</text><text x="393.7" y="465.7">AC5</text><text x="376.6" y="465.7">AC6</text><text x="359.4" y="465.7">AC7</text><text x="342.3" y="465.7">AC8</text><text x="325.2" y="465.7">AC9</text><text x="308.0" y="465.7">AC10</text><text x="290.9" y="465.7">AC11</text><text x="273.7" y="465.7">AC12</text><text x="239.5" y="465.7">AC14</text><text x="222.3" y="465.7">AC15</text><text x="205.2" y="465.7">AC16</text><text x="188.0" y="465.7">AC17</text><text x="170.9" y="465.7">AC18</text><text x="153.8" y="465.7">AC19</text><text x="136.6" y="465.7">AC20</text><text x="119.5" y="465.7">AC21</text><text x="102.3" y="465.7">AC22</text></g></svg>
<span class="t" style="left:826px;top:731.90px;line-height:20px;font-size:16.5px;letter-spacing:0;color:#1e1e1e;-webkit-text-stroke:0">S32G274A_Rev2_525bga - MAPBGA 525 package</span><div style="left:1519px;top:127px;width:489px;height:651px;background:#f0f0f0"></div>
<div style="left:1519px;top:127px;width:489px;height:29.5px;background:#e7e7e7"></div>
<div style="left:1613.5px;top:127px;width:141.5px;height:29.5px;background:#f3f3f3"></div>
<svg style="left:1523.5px;top:133.5px;" width="17" height="17" viewBox="0 0 17 17"><path d="M8.5 0.8 L17 8.6 H14.3 V16.5 H10.3 V11 H6.7 V16.5 H2.7 V8.6 H0 Z" fill="#2a9a7c"/><rect x="12.3" y="1.5" width="2.2" height="4" fill="#2a9a7c"/></svg>
<span class="t" style="left:1544px;top:132.80px;line-height:20px;letter-spacing:-0.28px;">Overview</span><svg style="left:1618px;top:134px;" width="14" height="17" viewBox="0 0 14 17"><path d="M1 1 H8.5 L13 5.5 V16 H1 Z" fill="#fff" stroke="#2a9a7c" stroke-width="1.5"/><path d="M8.5 1 V5.5 H13" fill="none" stroke="#2a9a7c" stroke-width="1.3"/><path d="M9.2 9.3 A2.6 2.6 0 1 0 9.2 13" fill="none" stroke="#2a9a7c" stroke-width="1.4"/></svg>
<span class="t" style="left:1636.3px;top:132.80px;line-height:20px;letter-spacing:-0.39px;">Code Preview</span><svg style="left:1736.4px;top:136.9px;" width="11.2" height="11.2" viewBox="0 0 12 12"><path d="M2.6 2.6 L9.4 9.4 M9.4 2.6 L2.6 9.4" stroke="#8e8e8e" stroke-width="4.1" stroke-linecap="square" fill="none"/><path d="M2.6 2.6 L9.4 9.4 M9.4 2.6 L2.6 9.4" stroke="#f6f6f6" stroke-width="1.9" stroke-linecap="square" fill="none"/></svg>
<svg style="left:1759.5px;top:134px;" width="17" height="17" viewBox="0 0 17 17"><rect x="1" y="1" width="15" height="15" rx="1.5" fill="#fff" stroke="#2a9a7c" stroke-width="1.7"/><path d="M5.5 3.5 V13.5 M11.5 3.5 V13.5" stroke="#2a9a7c" stroke-width="1.4"/><rect x="3.8" y="8.5" width="3.4" height="3.2" fill="#2a9a7c"/><rect x="9.8" y="4.8" width="3.4" height="3.2" fill="#2a9a7c"/></svg>
<span class="t" style="left:1780px;top:132.80px;line-height:20px;letter-spacing:-0.44px;">Registers</span><svg style="left:1966px;top:133.2px;" width="13" height="6" viewBox="0 0 13 6"><rect x="0.75" y="0.75" width="11" height="3.6" rx="1.2" fill="#fff" stroke="#8a8a8a" stroke-width="1.3"/></svg>
<svg style="left:1989.8px;top:133.7px;" width="12" height="12" viewBox="0 0 12 12"><rect x="0.75" y="0.75" width="10" height="10" rx="1" fill="#fff" stroke="#8a8a8a" stroke-width="1.4"/><rect x="0.75" y="0.75" width="10" height="2.4" fill="#8a8a8a"/></svg>
<div style="left:1519px;top:156.5px;width:489px;height:28px;background:#f5f5f5;border-top:1.5px solid #c2c2c2;box-sizing:border-box"></div>
<div style="left:1519px;top:156.5px;width:173px;height:28px;background:#f6f6f6;border-top:1.5px solid #c2c2c2;border-right:1.5px solid #c2c2c2;border-top-right-radius:5px;box-sizing:border-box"></div>
<div style="left:1692px;top:158px;width:173px;height:24.5px;background:#f1f1f1;border-right:1.5px solid #c8c8c8;border-bottom:1.5px solid #c2c2c2;box-sizing:border-box"></div>
<div style="left:1865px;top:181px;width:143px;height:1.5px;background:#d2d2d2"></div>
<span class="t" style="left:1524px;top:160.80px;line-height:20px;letter-spacing:-0.78px;">Siul2_Port_Ip_Cfg.c@C...</span><span class="t" style="left:1696.8px;top:160.80px;line-height:20px;letter-spacing:-0.75px;">Siul2_Port_Ip_Cfg.h@C...</span><div style="left:1866px;top:158px;width:142px;height:23.5px;background:#fefefe"></div>
<svg style="left:1872px;top:161.5px;" width="17" height="18" viewBox="0 0 17 18"><circle cx="7" cy="7" r="5.3" fill="none" stroke="#2a9a7c" stroke-width="2.4"/><path d="M10.8 10.8 L15 15.2" stroke="#2a9a7c" stroke-width="2.8"/></svg>
<svg style="left:1896px;top:161.5px;" width="17" height="18" viewBox="0 0 17 18"><circle cx="7" cy="7" r="5.3" fill="none" stroke="#2a9a7c" stroke-width="2.4"/><path d="M10.8 10.8 L15 15.2" stroke="#2a9a7c" stroke-width="2.8"/><path d="M4.3 7 H9.7 M7 4.3 V9.7" stroke="#2a9a7c" stroke-width="1.9"/></svg>
<svg style="left:1920px;top:161.5px;" width="17" height="18" viewBox="0 0 17 18"><circle cx="7" cy="7" r="5.3" fill="none" stroke="#2a9a7c" stroke-width="2.4"/><path d="M10.8 10.8 L15 15.2" stroke="#2a9a7c" stroke-width="2.8"/><path d="M4.3 7 H9.7" stroke="#2a9a7c" stroke-width="1.9"/></svg>
<svg style="left:1943px;top:161.5px;" width="17" height="16" viewBox="0 0 17 16"><path d="M1.6 8.5 V14 H15 V8.5" fill="none" stroke="#7c98c8" stroke-width="2.4"/><path d="M2.8 10 L6 10 L8 12 H11 L13.8 10 V13.5 H2.8Z" fill="#9db2d8"/><path d="M6.5 9.5 L12.5 3" fill="none" stroke="#7c98c8" stroke-width="1.6"/><circle cx="13" cy="2.6" r="1.5" fill="#7c98c8"/></svg>
<svg style="left:1967.5px;top:161px;" width="18" height="18" viewBox="0 0 18 18"><path d="M0.5 1 H14 L0.5 16.5 Z" fill="#2a9a7c"/><path d="M2.3 5 H7.3 M4.8 2.5 V7.5" stroke="#fff" stroke-width="1.5"/><path d="M9 13 H15.5" stroke="#2a9a7c" stroke-width="1.8"/></svg>
<svg style="left:1992.5px;top:166.5px;" width="11" height="7" viewBox="0 0 11 7"><path d="M0.5 0.5 H10.5 L5.5 6.5Z" fill="#111"/></svg>
<div style="left:1522px;top:184px;width:465px;height:551.5px;overflow:hidden;background:#fff;font-family:'Liberation Mono',monospace;font-size:15.46px;-webkit-text-stroke:0;letter-spacing:0"><span class="t" style="left:0px;top:2.40px;line-height:20px;width:32.59999999999991px;text-align:right;color:#757575">1</span><span class="t" style="left:35.5px;top:2.40px;line-height:20px;color:#3f7f5f">/*==================================================================================================</span><span class="t" style="left:0px;top:22.95px;line-height:20px;width:32.59999999999991px;text-align:right;color:#757575">2</span><span class="t" style="left:35.5px;top:22.95px;line-height:20px;color:#3f7f5f">*&nbsp;&nbsp;&nbsp;Project&nbsp;&nbsp;&nbsp;&nbsp;&nbsp;&nbsp;&nbsp;&nbsp;&nbsp;&nbsp;&nbsp;&nbsp;&nbsp;&nbsp;:&nbsp;RTD&nbsp;AUTOSAR&nbsp;4.4</span><span class="t" style="left:0px;top:43.51px;line-height:20px;width:32.59999999999991px;text-align:right;color:#757575">3</span><span class="t" style="left:35.5px;top:43.51px;line-height:20px;color:#3f7f5f">*&nbsp;&nbsp;&nbsp;Platform&nbsp;&nbsp;&nbsp;&nbsp;&nbsp;&nbsp;&nbsp;&nbsp;&nbsp;&nbsp;&nbsp;&nbsp;&nbsp;:&nbsp;CORTEXM</span><span class="t" style="left:0px;top:64.06px;line-height:20px;width:32.59999999999991px;text-align:right;color:#757575">4</span><span class="t" style="left:35.5px;top:64.06px;line-height:20px;color:#3f7f5f">*&nbsp;&nbsp;&nbsp;Peripheral&nbsp;&nbsp;&nbsp;&nbsp;&nbsp;&nbsp;&nbsp;&nbsp;&nbsp;&nbsp;&nbsp;:&nbsp;SIUL2</span><span class="t" style="left:0px;top:84.62px;line-height:20px;width:32.59999999999991px;text-align:right;color:#757575">5</span><span class="t" style="left:35.5px;top:84.62px;line-height:20px;color:#3f7f5f">*&nbsp;&nbsp;&nbsp;Dependencies&nbsp;&nbsp;&nbsp;&nbsp;&nbsp;&nbsp;&nbsp;&nbsp;&nbsp;:&nbsp;none</span><span class="t" style="left:0px;top:105.17px;line-height:20px;width:32.59999999999991px;text-align:right;color:#757575">6</span><span class="t" style="left:35.5px;top:105.17px;line-height:20px;color:#3f7f5f">*</span><span class="t" style="left:0px;top:125.73px;line-height:20px;width:32.59999999999991px;text-align:right;color:#757575">7</span><span class="t" style="left:35.5px;top:125.73px;line-height:20px;color:#3f7f5f">*&nbsp;&nbsp;&nbsp;Autosar&nbsp;Version&nbsp;&nbsp;&nbsp;&nbsp;&nbsp;&nbsp;:&nbsp;4.4.0</span><span class="t" style="left:0px;top:146.29px;line-height:20px;width:32.59999999999991px;text-align:right;color:#757575">8</span><span class="t" style="left:35.5px;top:146.29px;line-height:20px;color:#3f7f5f">*&nbsp;&nbsp;&nbsp;Autosar&nbsp;Revision&nbsp;&nbsp;&nbsp;&nbsp;&nbsp;:&nbsp;ASR_REL_4_4_REV_0000</span><span class="t" style="left:0px;top:166.84px;line-height:20px;width:32.59999999999991px;text-align:right;color:#757575">9</span><span class="t" style="left:35.5px;top:166.84px;line-height:20px;color:#3f7f5f">*&nbsp;&nbsp;&nbsp;Autosar&nbsp;Conf.Variant&nbsp;:</span><span class="t" style="left:0px;top:187.40px;line-height:20px;width:32.59999999999991px;text-align:right;color:#757575">10</span><span class="t" style="left:35.5px;top:187.40px;line-height:20px;color:#3f7f5f">*&nbsp;&nbsp;&nbsp;SW&nbsp;Version&nbsp;&nbsp;&nbsp;&nbsp;&nbsp;&nbsp;&nbsp;&nbsp;&nbsp;&nbsp;&nbsp;:&nbsp;4.0.2</span><span class="t" style="left:0px;top:207.95px;line-height:20px;width:32.59999999999991px;text-align:right;color:#757575">11</span><span class="t" style="left:35.5px;top:207.95px;line-height:20px;color:#3f7f5f">*&nbsp;&nbsp;&nbsp;Build&nbsp;Version&nbsp;&nbsp;&nbsp;&nbsp;&nbsp;&nbsp;&nbsp;&nbsp;:&nbsp;S32_RTD_4_0_2_P03_D2306_ASR_REL_4_4_REV_0000_20230630</span><span class="t" style="left:0px;top:228.50px;line-height:20px;width:32.59999999999991px;text-align:right;color:#757575">12</span><span class="t" style="left:35.5px;top:228.50px;line-height:20px;color:#3f7f5f">*</span><span class="t" style="left:0px;top:249.06px;line-height:20px;width:32.59999999999991px;text-align:right;color:#757575">13</span><span class="t" style="left:35.5px;top:249.06px;line-height:20px;color:#3f7f5f">*&nbsp;&nbsp;&nbsp;Copyright&nbsp;2020&nbsp;-&nbsp;2023&nbsp;NXP&nbsp;Semiconductors</span><span class="t" style="left:0px;top:269.61px;line-height:20px;width:32.59999999999991px;text-align:right;color:#757575">14</span><span class="t" style="left:35.5px;top:269.61px;line-height:20px;color:#3f7f5f">*</span><span class="t" style="left:0px;top:290.17px;line-height:20px;width:32.59999999999991px;text-align:right;color:#757575">15</span><span class="t" style="left:35.5px;top:290.17px;line-height:20px;color:#3f7f5f">*&nbsp;&nbsp;&nbsp;NXP&nbsp;Confidential.&nbsp;This&nbsp;software&nbsp;is&nbsp;owned&nbsp;or&nbsp;controlled&nbsp;by&nbsp;NXP&nbsp;and&nbsp;may&nbsp;only&nbsp;be</span><span class="t" style="left:0px;top:310.72px;line-height:20px;width:32.59999999999991px;text-align:right;color:#757575">16</span><span class="t" style="left:35.5px;top:310.72px;line-height:20px;color:#3f7f5f">*&nbsp;&nbsp;&nbsp;used&nbsp;strictly&nbsp;in&nbsp;accordance&nbsp;with&nbsp;the&nbsp;applicable&nbsp;license&nbsp;terms.&nbsp;By&nbsp;expressly</span><span class="t" style="left:0px;top:331.28px;line-height:20px;width:32.59999999999991px;text-align:right;color:#757575">17</span><span class="t" style="left:35.5px;top:331.28px;line-height:20px;color:#3f7f5f">*&nbsp;&nbsp;&nbsp;accepting&nbsp;such&nbsp;terms&nbsp;or&nbsp;by&nbsp;downloading,&nbsp;installing,&nbsp;activating&nbsp;and/or&nbsp;otherwise</span><span class="t" style="left:0px;top:351.83px;line-height:20px;width:32.59999999999991px;text-align:right;color:#757575">18</span><span class="t" style="left:35.5px;top:351.83px;line-height:20px;color:#3f7f5f">*&nbsp;&nbsp;&nbsp;using&nbsp;the&nbsp;software,&nbsp;you&nbsp;are&nbsp;agreeing&nbsp;that&nbsp;you&nbsp;have&nbsp;read,&nbsp;and&nbsp;that&nbsp;you&nbsp;agree&nbsp;to</span><span class="t" style="left:0px;top:372.39px;line-height:20px;width:32.59999999999991px;text-align:right;color:#757575">19</span><span class="t" style="left:35.5px;top:372.39px;line-height:20px;color:#3f7f5f">*&nbsp;&nbsp;&nbsp;comply&nbsp;with&nbsp;and&nbsp;are&nbsp;bound&nbsp;by,&nbsp;such&nbsp;license&nbsp;terms.&nbsp;If&nbsp;you&nbsp;do&nbsp;not&nbsp;agree&nbsp;to&nbsp;be</span><span class="t" style="left:0px;top:392.94px;line-height:20px;width:32.59999999999991px;text-align:right;color:#757575">20</span><span class="t" style="left:35.5px;top:392.94px;line-height:20px;color:#3f7f5f">*&nbsp;&nbsp;&nbsp;bound&nbsp;by&nbsp;the&nbsp;applicable&nbsp;license&nbsp;terms,&nbsp;then&nbsp;you&nbsp;may&nbsp;not&nbsp;retain,&nbsp;install,</span><span class="t" style="left:0px;top:413.50px;line-height:20px;width:32.59999999999991px;text-align:right;color:#757575">21</span><span class="t" style="left:35.5px;top:413.50px;line-height:20px;color:#3f7f5f">*&nbsp;&nbsp;&nbsp;activate&nbsp;or&nbsp;otherwise&nbsp;use&nbsp;the&nbsp;software.</span><span class="t" style="left:0px;top:434.06px;line-height:20px;width:32.59999999999991px;text-align:right;color:#757575">22</span><span class="t" style="left:35.5px;top:434.06px;line-height:20px;color:#3f7f5f">==================================================================================================*/</span><span class="t" style="left:0px;top:454.61px;line-height:20px;width:32.59999999999991px;text-align:right;color:#757575">23</span><span class="t" style="left:0px;top:475.17px;line-height:20px;width:32.59999999999991px;text-align:right;color:#757575">24</span><span class="t" style="left:35.5px;top:475.17px;line-height:20px;color:#3f7f5f">/**</span><span class="t" style="left:0px;top:495.72px;line-height:20px;width:32.59999999999991px;text-align:right;color:#757575">25</span><span class="t" style="left:35.5px;top:495.72px;line-height:20px;color:#3f7f5f">*&nbsp;&nbsp;&nbsp;@file&nbsp;&nbsp;&nbsp;&nbsp;&nbsp;&nbsp;Siul2_Port_Ip_Cfg.c</span><span class="t" style="left:0px;top:516.27px;line-height:20px;width:32.59999999999991px;text-align:right;color:#757575">26</span><span class="t" style="left:35.5px;top:516.27px;line-height:20px;color:#3f7f5f">*</span><span class="t" style="left:0px;top:536.83px;line-height:20px;width:32.59999999999991px;text-align:right;color:#757575">27</span><span class="t" style="left:35.5px;top:536.83px;line-height:20px;color:#3f7f5f">*&nbsp;&nbsp;&nbsp;@addtogroup&nbsp;Port_CFG</span></div>
<div style="left:1522px;top:735.5px;width:465px;height:25px;background:#f0f0f0"></div>
<div style="left:1522px;top:735.5px;width:33.5px;height:22.5px;background:#f8f8f8"></div>
<div style="left:1987px;top:184px;width:21px;height:554px;background:#f0f0f0"></div>
<div style="left:1995.4px;top:206.2px;width:6px;height:30.4px;background:#7f7f7f"></div>
<div style="left:1577.2px;top:743.7px;width:180.6px;height:6.3px;background:#7f7f7f"></div>
<div style="left:1519px;top:764.5px;width:489px;height:1.5px;background:#c4c4c4"></div>
<div style="left:1519px;top:766px;width:489px;height:32.2px;background:#f7f7f7"></div>
<div style="left:1519px;top:798.2px;width:489px;height:1.6px;background:#c6c6c6"></div>
<div style="left:1524px;top:768px;width:25px;height:28.5px;background:#fff;border:1px solid #dcdcdc;border-radius:3px;box-sizing:border-box"></div>
<svg style="left:1530.5px;top:776.5px;" width="12" height="12" viewBox="0 0 12 12"><path d="M6 0.8 L11.5 11 H0.5 Z" fill="#f2b632" stroke="#d99a1a" stroke-width="0.8" stroke-linejoin="round"/><path d="M6 4.2 V7.6 M6 8.8 V10" stroke="#5a3a00" stroke-width="1.5"/></svg>
<span class="t" style="left:1556.2px;top:773.20px;line-height:20px;letter-spacing:-0.20px;">The source code is generated with warning(s).</span><div style="left:1519px;top:806px;width:489px;height:219px;background:#f0f0f0"></div>
<div style="left:1519px;top:806px;width:489px;height:29.5px;background:#e7e7e7"></div>
<div style="left:1519px;top:806px;width:115.5px;height:29.5px;background:#f3f3f3"></div>
<svg style="left:1523px;top:813.5px;" width="18" height="17" viewBox="0 0 18 17"><path d="M9.2 3 L16 14.3 H2.6 Z" fill="#2a9a7c" stroke="#2a9a7c" stroke-linejoin="round" stroke-width="3"/><path d="M9.3 6.5 V10.6" stroke="#fff" stroke-width="1.7"/><circle cx="9.3" cy="13" r="1.15" fill="#fff"/><rect x="0.3" y="0.3" width="7.2" height="7.2" rx="1.5" fill="#d9363e"/><path d="M2.2 2.2 L5.6 5.6 M5.6 2.2 L2.2 5.6" stroke="#fff" stroke-width="1.3"/></svg>
<span class="t" style="left:1544.4px;top:812.40px;line-height:20px;letter-spacing:-0.26px;">Problems</span><svg style="left:1616.0px;top:816.1999999999999px;" width="11.2" height="11.2" viewBox="0 0 12 12"><path d="M2.6 2.6 L9.4 9.4 M9.4 2.6 L2.6 9.4" stroke="#8e8e8e" stroke-width="4.1" stroke-linecap="square" fill="none"/><path d="M2.6 2.6 L9.4 9.4 M9.4 2.6 L2.6 9.4" stroke="#f6f6f6" stroke-width="1.9" stroke-linecap="square" fill="none"/></svg>
<svg style="left:1891px;top:806.5px;" width="19" height="22" viewBox="0 0 19 22"><path d="M9.5 4.3 A4.8 4.8 0 0 1 12.6 12.8 L11.8 16 H7.2 L6.4 12.8 A4.8 4.8 0 0 1 9.5 4.3Z" fill="none" stroke="#2a9a7c" stroke-width="2"/><path d="M6.8 13.5 H12.2 L11.6 18 L10.4 19.8 H8.6 L7.4 18Z" fill="#2a9a7c"/><path d="M9.5 0.3 V2.3 M3.6 2.8 L4.9 4.3 M15.4 2.8 L14.1 4.3 M1 8.8 H3 M16 8.8 H18 M2.6 14 L4 12.8 M16.4 14 L15 12.8" stroke="#2a9a7c" stroke-width="1.2" stroke-dasharray="1.2 0.8"/><circle cx="9.5" cy="9" r="1.3" fill="#2a9a7c"/></svg>
<div style="left:1913.4px;top:807.4px;width:23px;height:20.6px;background:#c9e3f8;border:1px solid #a6d0f4;border-radius:2.5px;box-sizing:border-box"></div>
<div style="left:1936.8px;top:807.4px;width:23px;height:20.6px;background:#c9e3f8;border:1px solid #a6d0f4;border-radius:2.5px;box-sizing:border-box"></div>
<span class="t" style="left:1918.8px;top:808.00px;line-height:20px;color:#2a9a7c;font-size:17.5px;font-weight:bold;letter-spacing:0;-webkit-text-stroke:0">B</span><svg style="left:1940.5px;top:810.5px;" width="16" height="15" viewBox="0 0 16 15"><path d="M1.2 1.4 H14.8 L9.6 7.8 V13.4 L6.6 12 V7.8 Z" fill="none" stroke="#2a9a7c" stroke-width="2.3" stroke-linejoin="round"/><path d="M1.2 1.4 H14.8 L12.5 4.2 H3.5Z" fill="#2a9a7c"/></svg>
<svg style="left:1965.5px;top:812.3px;" width="13" height="6" viewBox="0 0 13 6"><rect x="0.75" y="0.75" width="11" height="3.6" rx="1.2" fill="#fff" stroke="#8a8a8a" stroke-width="1.3"/></svg>
<svg style="left:1989.6px;top:812.8px;" width="12" height="12" viewBox="0 0 12 12"><rect x="0.75" y="0.75" width="10" height="10" rx="1" fill="#fff" stroke="#8a8a8a" stroke-width="1.4"/><rect x="0.75" y="0.75" width="10" height="2.4" fill="#8a8a8a"/></svg>
<div style="left:1526.2px;top:842.3px;width:478.6px;height:24.5px;background:#fff;border-bottom:2px solid #b2b2b2"></div>
<span class="t" style="left:1532.4px;top:845.30px;line-height:20px;letter-spacing:0.13px;color:#5e5e5e">type filter text</span><div style="left:1525px;top:872px;width:481px;height:131px;overflow:hidden;background:#efefef"><div style="left:0px;top:0px;width:102.5px;height:27.8px;background:#fff"></div>
<span class="t" style="left:6.2px;top:4.70px;line-height:20px;letter-spacing:-0.55px;">Level</span><div style="left:103.70000000000005px;top:0px;width:136.79999999999995px;height:27.8px;background:#fff"></div>
<span class="t" style="left:109.20000000000005px;top:4.70px;line-height:20px;letter-spacing:-0.57px;">Resource</span><div style="left:241.70000000000005px;top:0px;width:241.29999999999995px;height:27.8px;background:#fff"></div>
<span class="t" style="left:247.20000000000005px;top:4.70px;line-height:20px;letter-spacing:-0.65px;">Issue</span><svg style="left:47px;top:2px;" width="10" height="6" viewBox="0 0 10 6"><path d="M1 1 L5 4.6 L9 1" fill="none" stroke="#7a7a7a" stroke-width="1.1"/></svg>
<div style="left:0px;top:27.799999999999955px;width:102.5px;height:22.6px;background:#f7f7f7"></div>
<div style="left:103.70000000000005px;top:27.799999999999955px;width:136.79999999999995px;height:22.6px;background:#fff"></div>
<div style="left:241.70000000000005px;top:27.799999999999955px;width:241.29999999999995px;height:22.6px;background:#fff"></div>
<div style="left:0px;top:51.60000000000002px;width:102.5px;height:22.6px;background:#f7f7f7"></div>
<div style="left:103.70000000000005px;top:51.60000000000002px;width:136.79999999999995px;height:22.6px;background:#fff"></div>
<div style="left:241.70000000000005px;top:51.60000000000002px;width:241.29999999999995px;height:22.6px;background:#fff"></div>
<div style="left:0px;top:75px;width:102.5px;height:22.6px;background:#f7f7f7"></div>
<div style="left:103.70000000000005px;top:75px;width:136.79999999999995px;height:22.6px;background:#fff"></div>
<div style="left:241.70000000000005px;top:75px;width:241.29999999999995px;height:22.6px;background:#fff"></div>
<div style="left:0px;top:98.5px;width:102.5px;height:22.6px;background:#f7f7f7"></div>
<div style="left:103.70000000000005px;top:98.5px;width:136.79999999999995px;height:22.6px;background:#fff"></div>
<div style="left:241.70000000000005px;top:98.5px;width:241.29999999999995px;height:22.6px;background:#fff"></div>
<div style="left:0px;top:122.20000000000005px;width:102.5px;height:22.6px;background:#f7f7f7"></div>
<div style="left:103.70000000000005px;top:122.20000000000005px;width:136.79999999999995px;height:22.6px;background:#fff"></div>
<div style="left:241.70000000000005px;top:122.20000000000005px;width:241.29999999999995px;height:22.6px;background:#fff"></div>
<svg style="left:26.499999999999954px;top:33.2px;" width="11.6" height="11.6" viewBox="0 0 13 13"><circle cx="6.5" cy="6.5" r="6" fill="#d53c44"/><path d="M4.3 4.3 L8.7 8.7 M8.7 4.3 L4.3 8.7" stroke="#fff" stroke-width="2" stroke-linecap="round"/></svg>
<span class="t" style="left:45.5px;top:29.70px;line-height:20px;letter-spacing:-0.34px;">Error</span><span class="t" style="left:108.5px;top:29.70px;line-height:20px;letter-spacing:-1.20px;">#B8-LLCE_LPSPI_0...</span><span class="t" style="left:247px;top:29.70px;line-height:20px;letter-spacing:0.05px;">Routing conflict on 'Routed pin/signal</span><svg style="left:26.499999999999954px;top:56.65000000000005px;" width="11.6" height="11.6" viewBox="0 0 13 13"><circle cx="6.5" cy="6.5" r="6" fill="#d53c44"/><path d="M4.3 4.3 L8.7 8.7 M8.7 4.3 L4.3 8.7" stroke="#fff" stroke-width="2" stroke-linecap="round"/></svg>
<span class="t" style="left:45.5px;top:53.15px;line-height:20px;letter-spacing:-0.34px;">Error</span><span class="t" style="left:108.5px;top:53.15px;line-height:20px;letter-spacing:-0.55px;">#B8-SIUL2_0.gpio...</span><span class="t" style="left:247px;top:53.15px;line-height:20px;letter-spacing:0.05px;">Routing conflict on 'Routed pin/signal</span></div>
<div style="left:1546.9px;top:1011px;width:148.6px;height:6px;background:#7f7f7f"></div>
<div style="left:40px;top:782px;width:1474px;height:243px;background:#f5f5f5"></div>
<div style="left:40px;top:782px;width:1474px;height:30px;background:#e7e7e7"></div>
<div style="left:40px;top:782px;width:133px;height:30px;background:#f5f5f5"></div>
<svg style="left:41.2px;top:789px;" width="18" height="19" viewBox="0 0 18 19"><g fill="none" stroke="#2a9a7c" stroke-width="1.9"><rect x="4.3" y="3" width="9.6" height="13.6" rx="0.8"/><path d="M1.6 6.3 H4.3 M13.9 6.3 H16.6" stroke-linecap="round" stroke-width="1.7"/><path d="M1.6 9.8 H4.3 M13.9 9.8 H16.6" stroke-linecap="round" stroke-width="1.7"/><path d="M1.6 13.3 H4.3 M13.9 13.3 H16.6" stroke-linecap="round" stroke-width="1.7"/><path d="M4.3 6.6 H13.9 M4.3 13.2 H13.9 M4.3 6.6 L13.9 11.4" stroke-width="1.6"/></g></svg>
<span class="t" style="left:61.8px;top:788.40px;line-height:20px;letter-spacing:-0.12px;">Routing Details</span><svg style="left:1441.5px;top:785.8px;" width="18" height="16" viewBox="0 0 18 16"><path d="M2.5 1 H15 Q16.8 1 16.8 2.8 V10.2 Q16.8 12 15 12 H13.5 L12.5 14.5 L10.5 12 H2.5 Q0.8 12 0.8 10.2 V2.8 Q0.8 1 2.5 1 Z" fill="none" stroke="#2a9a7c" stroke-width="1.5"/><path d="M4.5 5 H13 M6 8.2 H11.5" stroke="#2a9a7c" stroke-width="1.5"/></svg>
<svg style="left:1468px;top:789px;" width="13" height="6" viewBox="0 0 13 6"><rect x="0.75" y="0.75" width="11" height="3.6" rx="1.2" fill="#fff" stroke="#8a8a8a" stroke-width="1.3"/></svg>
<svg style="left:1492px;top:788.6px;" width="12" height="12" viewBox="0 0 12 12"><rect x="0.75" y="0.75" width="10" height="10" rx="1" fill="#fff" stroke="#8a8a8a" stroke-width="1.4"/><rect x="0.75" y="0.75" width="10" height="2.4" fill="#8a8a8a"/></svg>
<div style="left:43.5px;top:817.7px;width:37px;height:28.3px;background:#cce4f7;border:1.8px solid #5b93c7;border-radius:5px;box-sizing:border-box"></div>
<span class="t" style="left:48.7px;top:822.30px;line-height:20px;letter-spacing:-0.66px;">Pins</span><div style="left:87.3px;top:817.7px;width:59.3px;height:28.3px;background:#cce4f7;border:1.8px solid #5b93c7;border-radius:5px;box-sizing:border-box"></div>
<span class="t" style="left:92.8px;top:822.30px;line-height:20px;letter-spacing:-0.47px;">Signals</span><div style="left:153.4px;top:816.6px;width:1353.6px;height:29px;background:#fff;border-bottom:2px solid #b2b2b2"></div>
<svg style="left:158px;top:823px;" width="14" height="15" viewBox="0 0 14 15"><g fill="none" stroke="#555" stroke-width="1.6"><circle cx="9" cy="5.5" r="4"/><path d="M6.2 8.5 L1.2 14" stroke-width="2"/></g></svg>
<span class="t" style="left:176.4px;top:820.60px;line-height:20px;letter-spacing:0.13px;color:#5e5e5e">type filter text</span><div style="left:42px;top:851px;width:1466px;height:173.5px;background:#fbfbfb;border:1px solid #c8c8c8;box-sizing:border-box"></div>
<div style="left:49.4px;top:857.5px;width:1452px;height:159px;background:#f0f0f0;border:1px solid #b9d1ea;box-sizing:border-box"></div>
<div style="left:50px;top:858px;width:1451px;height:30px;background:#b9d1ea"></div>
<span class="t" style="left:53.8px;top:863.50px;line-height:20px;letter-spacing:-0.32px;">Routing Details for BOARD...</span><div style="left:269.8px;top:859.8px;width:39.4px;height:26.4px;background:#fff;border-bottom:1.5px solid #8a8a8a;box-sizing:border-box"></div>
<span class="t" style="left:281.3px;top:863.60px;line-height:20px;letter-spacing:-0.36px;">10</span><div style="left:314.9px;top:862.4px;width:22.6px;height:21.4px;background:#bdd2ea;border:1px solid #a4bcda;border-radius:2px;box-sizing:border-box"></div>
<div style="left:343px;top:862.4px;width:22.6px;height:21.4px;background:#bdd2ea;border:1px solid #a4bcda;border-radius:2px;box-sizing:border-box"></div>
<div style="left:370.7px;top:862.4px;width:22.6px;height:21.4px;background:#bdd2ea;border:1px solid #a4bcda;border-radius:2px;box-sizing:border-box"></div>
<div style="left:398.2px;top:862.4px;width:22.6px;height:21.4px;background:#bdd2ea;border:1px solid #a4bcda;border-radius:2px;box-sizing:border-box"></div>
<svg style="left:318.2px;top:865px;" width="16" height="16" viewBox="0 0 16 16"><circle cx="8" cy="8" r="7.6" fill="#1f9a78"/><path d="M4 8 H12 M8 4 V12" stroke="#fff" stroke-width="2.3"/></svg>
<svg style="left:346.3px;top:865px;" width="16" height="16" viewBox="0 0 16 16"><circle cx="8" cy="8" r="7.6" fill="#bcc4cc"/><path d="M4.8 4.8 L11.2 11.2 M11.2 4.8 L4.8 11.2" stroke="#e2e8f0" stroke-width="2.2"/></svg>
<svg style="left:375px;top:867px;" width="14" height="12" viewBox="0 0 14 12"><path d="M2 8.5 L7 3.5 L12 8.5" fill="none" stroke="#aebccc" stroke-width="1.8"/></svg>
<svg style="left:402.5px;top:867px;" width="14" height="12" viewBox="0 0 14 12"><path d="M2 3.5 L7 8.5 L12 3.5" fill="none" stroke="#aebccc" stroke-width="1.8"/></svg>
<div style="left:51px;top:888px;width:1427px;height:107.4px;overflow:hidden;background:#f1f1f1"><div style="left:1px;top:0px;width:80.6px;height:28.5px;background:#fff"></div>
<span class="t" style="left:6.8px;top:4.30px;line-height:20px;letter-spacing:0.44px;overflow:hidden;max-width:76.0px">#</span><div style="left:83px;top:0px;width:80.9px;height:28.5px;background:#fff"></div>
<span class="t" style="left:88.8px;top:4.30px;line-height:20px;letter-spacing:-0.24px;overflow:hidden;max-width:76.3px">Peripheral</span><div style="left:165.3px;top:0px;width:80.9px;height:28.5px;background:#fff"></div>
<span class="t" style="left:171.10000000000002px;top:4.30px;line-height:20px;letter-spacing:-0.34px;overflow:hidden;max-width:76.3px">Signal</span><div style="left:247.60000000000002px;top:0px;width:39.99999999999998px;height:28.5px;background:#fff"></div>
<span class="t" style="left:253.40000000000003px;top:4.30px;line-height:20px;letter-spacing:-0.48px;overflow:hidden;max-width:35.4px">Ar...</span><div style="left:289px;top:0px;width:80.99999999999997px;height:28.5px;background:#fff"></div>
<span class="t" style="left:294.8px;top:4.30px;line-height:20px;letter-spacing:-0.40px;overflow:hidden;max-width:76.4px">Routed ...</span><div style="left:371.4px;top:0px;width:80.9px;height:28.5px;background:#fff"></div>
<span class="t" style="left:377.2px;top:4.30px;line-height:20px;letter-spacing:-0.44px;overflow:hidden;max-width:76.3px">Label</span><div style="left:453.7px;top:0px;width:80.9px;height:28.5px;background:#fff"></div>
<span class="t" style="left:459.5px;top:4.30px;line-height:20px;letter-spacing:0.11px;overflow:hidden;max-width:76.3px">Identifier</span><div style="left:536px;top:0px;width:80.99999999999997px;height:28.5px;background:#fff"></div>
<span class="t" style="left:541.8px;top:4.30px;line-height:20px;letter-spacing:-0.33px;overflow:hidden;max-width:76.4px">Power gr...</span><div style="left:618.4px;top:0px;width:80.90000000000006px;height:28.5px;background:#fff"></div>
<span class="t" style="left:624.1999999999999px;top:4.30px;line-height:20px;letter-spacing:0.03px;overflow:hidden;max-width:76.3px">Direction</span><div style="left:700.7px;top:0px;width:80.89999999999995px;height:28.5px;background:#fff"></div>
<span class="t" style="left:706.5px;top:4.30px;line-height:20px;letter-spacing:-0.26px;overflow:hidden;max-width:76.3px">Output B...</span><div style="left:783px;top:0px;width:80.99999999999997px;height:28.5px;background:#fff"></div>
<span class="t" style="left:788.8px;top:4.30px;line-height:20px;letter-spacing:-0.31px;overflow:hidden;max-width:76.4px">Open Dr...</span><div style="left:865.4px;top:0px;width:80.90000000000006px;height:28.5px;background:#fff"></div>
<span class="t" style="left:871.1999999999999px;top:4.30px;line-height:20px;letter-spacing:-0.31px;overflow:hidden;max-width:76.3px">Input Bu...</span><div style="left:947.7px;top:0px;width:80.89999999999995px;height:28.5px;background:#fff"></div>
<span class="t" style="left:953.5px;top:4.30px;line-height:20px;letter-spacing:-0.70px;overflow:hidden;max-width:76.3px">Slew Rat...</span><div style="left:1030px;top:0px;width:81.00000000000009px;height:28.5px;background:#fff"></div>
<span class="t" style="left:1035.8px;top:4.30px;line-height:20px;letter-spacing:-0.57px;overflow:hidden;max-width:76.4px">Pullup E...</span><div style="left:1112.4px;top:0px;width:80.89999999999995px;height:28.5px;background:#fff"></div>
<span class="t" style="left:1118.2px;top:4.30px;line-height:20px;letter-spacing:-0.38px;overflow:hidden;max-width:76.3px">Pull Select</span><div style="left:1194.7px;top:0px;width:80.89999999999995px;height:28.5px;background:#fff"></div>
<span class="t" style="left:1200.5px;top:4.30px;line-height:20px;letter-spacing:-0.50px;overflow:hidden;max-width:76.3px">Safe Mo...</span><div style="left:1277px;top:0px;width:81.00000000000009px;height:28.5px;background:#fff"></div>
<span class="t" style="left:1282.8px;top:4.30px;line-height:20px;letter-spacing:-0.22px;overflow:hidden;max-width:76.4px">Initial Va...</span><div style="left:1359.4px;top:0px;width:65.1999999999999px;height:28.5px;background:#fff"></div>
<span class="t" style="left:1365.2px;top:4.30px;line-height:20px;letter-spacing:-0.66px;overflow:hidden;max-width:60.6px">IRQ Edge</span><div style="left:1px;top:28.200000000000024px;width:80.6px;height:23.2px;background:#fff"></div>
<span class="t" style="left:23.5px;top:29.80px;line-height:20px;letter-spacing:-0.95px;">B8</span><div style="left:83px;top:28.200000000000024px;width:80.9px;height:23.2px;background:#fff"></div>
<span class="t" style="left:88.8px;top:29.80px;line-height:20px;letter-spacing:-0.91px;">GMAC_0</span><div style="left:165.3px;top:28.200000000000024px;width:80.9px;height:23.2px;background:#fff"></div>
<span class="t" style="left:171.10000000000002px;top:29.80px;line-height:20px;letter-spacing:-0.64px;">gmac_ts...</span><div style="left:247.60000000000002px;top:28.200000000000024px;width:39.99999999999998px;height:23.2px;background:#fff"></div>
<span class="t" style="left:253.40000000000003px;top:29.80px;line-height:20px;color:#a6a6a6;letter-spacing:1px">&lt;-</span><div style="left:289px;top:28.200000000000024px;width:80.99999999999997px;height:23.2px;background:#fff"></div>
<span class="t" style="left:294.8px;top:29.80px;line-height:20px;letter-spacing:-0.69px;">[B8] PA_...</span><div style="left:371.4px;top:28.200000000000024px;width:80.9px;height:23.2px;background:#fff"></div>
<div style="left:453.7px;top:28.200000000000024px;width:80.9px;height:23.2px;background:#fff"></div>
<span class="t" style="left:459.5px;top:29.80px;line-height:20px;letter-spacing:0.30px;font-style:italic">n/a</span><div style="left:536px;top:28.200000000000024px;width:82.39999999999998px;height:24.599999999999998px;background:#ececec"></div>
<span class="t" style="left:541.8px;top:29.80px;line-height:20px;letter-spacing:-0.85px;color:#a8a8a8;font-style:italic">VDD_IO...</span><div style="left:618.4px;top:28.200000000000024px;width:82.30000000000007px;height:24.599999999999998px;background:#ececec"></div>
<span class="t" style="left:624.1999999999999px;top:29.80px;line-height:20px;letter-spacing:0.23px;font-style:italic">Input</span><div style="left:700.7px;top:28.200000000000024px;width:80.89999999999995px;height:23.2px;background:#fff"></div>
<span class="t" style="left:706.5px;top:29.80px;line-height:20px;letter-spacing:-0.41px;font-style:italic">Enabled</span><div style="left:783px;top:28.200000000000024px;width:80.99999999999997px;height:23.2px;background:#fff"></div>
<span class="t" style="left:788.8px;top:29.80px;line-height:20px;letter-spacing:-0.22px;font-style:italic">Disabled</span><div style="left:865.4px;top:28.200000000000024px;width:80.90000000000006px;height:23.2px;background:#fff"></div>
<span class="t" style="left:871.1999999999999px;top:29.80px;line-height:20px;letter-spacing:-0.41px;font-style:italic">Enabled</span><div style="left:947.7px;top:28.200000000000024px;width:80.89999999999995px;height:23.2px;background:#fff"></div>
<span class="t" style="left:953.5px;top:29.80px;line-height:20px;letter-spacing:-0.84px;font-style:italic">FAST pa...</span><div style="left:1030px;top:28.200000000000024px;width:81.00000000000009px;height:23.2px;background:#fff"></div>
<span class="t" style="left:1035.8px;top:29.80px;line-height:20px;letter-spacing:-0.22px;font-style:italic">Disabled</span><div style="left:1112.4px;top:28.200000000000024px;width:80.89999999999995px;height:23.2px;background:#fff"></div>
<span class="t" style="left:1118.2px;top:29.80px;line-height:20px;letter-spacing:-0.06px;font-style:italic">Pulldown</span><div style="left:1194.7px;top:28.200000000000024px;width:80.89999999999995px;height:23.2px;background:#fff"></div>
<span class="t" style="left:1200.5px;top:29.80px;line-height:20px;letter-spacing:-0.31px;font-style:italic">Disable</span><div style="left:1277px;top:28.200000000000024px;width:81.00000000000009px;height:23.2px;background:#fff"></div>
<span class="t" style="left:1282.8px;top:29.80px;line-height:20px;letter-spacing:-0.40px;font-style:italic">Low</span><div style="left:1359.4px;top:28.200000000000024px;width:65.1999999999999px;height:24.599999999999998px;background:#ececec"></div>
<span class="t" style="left:1365.2px;top:29.80px;line-height:20px;letter-spacing:0.30px;font-style:italic">n/a</span><div style="left:1px;top:52.85px;width:80.6px;height:23.2px;background:#fff"></div>
<span class="t" style="left:23.5px;top:54.45px;line-height:20px;letter-spacing:-0.95px;">B8</span><div style="left:83px;top:52.85px;width:80.9px;height:23.2px;background:#fff"></div>
<span class="t" style="left:88.8px;top:54.45px;line-height:20px;letter-spacing:-1.35px;">LLCE_LP...</span><div style="left:165.3px;top:52.85px;width:80.9px;height:23.2px;background:#fff"></div>
<span class="t" style="left:171.10000000000002px;top:54.45px;line-height:20px;letter-spacing:-0.64px;">lpspi_sc...</span><div style="left:247.60000000000002px;top:52.85px;width:39.99999999999998px;height:23.2px;background:#fff"></div>
<span class="t" style="left:253.40000000000003px;top:54.45px;line-height:20px;color:#a6a6a6;letter-spacing:1px">-&gt;</span><div style="left:289px;top:52.85px;width:82.39999999999998px;height:24.599999999999998px;background:#f78c8c"></div>
<span class="t" style="left:294.8px;top:54.45px;line-height:20px;letter-spacing:-0.69px;color:#c01818">[B8] PA_...</span><svg style="left:289.5px;top:53.35px;" width="5" height="5" viewBox="0 0 5 5"><rect x="0.6" y="0.6" width="3.6" height="3.6" fill="#fff" stroke="#c01818" stroke-width="1"/></svg>
<div style="left:371.4px;top:52.85px;width:80.9px;height:23.2px;background:#fff"></div>
<div style="left:453.7px;top:52.85px;width:80.9px;height:23.2px;background:#fff"></div>
<span class="t" style="left:459.5px;top:54.45px;line-height:20px;letter-spacing:0.30px;font-style:italic">n/a</span><div style="left:536px;top:52.85px;width:82.39999999999998px;height:24.599999999999998px;background:#ececec"></div>
<span class="t" style="left:541.8px;top:54.45px;line-height:20px;letter-spacing:-0.85px;color:#a8a8a8;font-style:italic">VDD_IO...</span><div style="left:618.4px;top:52.85px;width:80.90000000000006px;height:23.2px;background:#fff"></div>
<span class="t" style="left:624.1999999999999px;top:54.45px;line-height:20px;letter-spacing:0.30px;">Output</span><div style="left:700.7px;top:52.85px;width:80.89999999999995px;height:23.2px;background:#fff"></div>
<span class="t" style="left:706.5px;top:54.45px;line-height:20px;letter-spacing:-0.41px;font-style:italic">Enabled</span><div style="left:783px;top:52.85px;width:80.99999999999997px;height:23.2px;background:#fff"></div>
<span class="t" style="left:788.8px;top:54.45px;line-height:20px;letter-spacing:-0.22px;font-style:italic">Disabled</span><div style="left:865.4px;top:52.85px;width:80.90000000000006px;height:23.2px;background:#fff"></div>
<span class="t" style="left:871.1999999999999px;top:54.45px;line-height:20px;letter-spacing:-0.41px;font-style:italic">Enabled</span><div style="left:947.7px;top:52.85px;width:80.89999999999995px;height:23.2px;background:#fff"></div>
<span class="t" style="left:953.5px;top:54.45px;line-height:20px;letter-spacing:-0.84px;font-style:italic">FAST pa...</span><div style="left:1030px;top:52.85px;width:81.00000000000009px;height:23.2px;background:#fff"></div>
<span class="t" style="left:1035.8px;top:54.45px;line-height:20px;letter-spacing:-0.22px;font-style:italic">Disabled</span><div style="left:1112.4px;top:52.85px;width:80.89999999999995px;height:23.2px;background:#fff"></div>
<span class="t" style="left:1118.2px;top:54.45px;line-height:20px;letter-spacing:-0.06px;font-style:italic">Pulldown</span><div style="left:1194.7px;top:52.85px;width:80.89999999999995px;height:23.2px;background:#fff"></div>
<span class="t" style="left:1200.5px;top:54.45px;line-height:20px;letter-spacing:-0.31px;font-style:italic">Disable</span><div style="left:1277px;top:52.85px;width:81.00000000000009px;height:23.2px;background:#fff"></div>
<span class="t" style="left:1282.8px;top:54.45px;line-height:20px;letter-spacing:-0.40px;font-style:italic">Low</span><div style="left:1359.4px;top:52.85px;width:65.1999999999999px;height:24.599999999999998px;background:#ececec"></div>
<span class="t" style="left:1365.2px;top:54.45px;line-height:20px;letter-spacing:0.30px;font-style:italic">n/a</span><svg style="left:7.499999999999997px;top:57.650000000000006px;" width="11.6" height="11.6" viewBox="0 0 13 13"><circle cx="6.5" cy="6.5" r="6" fill="#d53c44"/><path d="M4.3 4.3 L8.7 8.7 M8.7 4.3 L4.3 8.7" stroke="#fff" stroke-width="2" stroke-linecap="round"/></svg>
<div style="left:1px;top:77.49999999999997px;width:80.6px;height:23.2px;background:#fff"></div>
<span class="t" style="left:23.5px;top:79.10px;line-height:20px;letter-spacing:-0.95px;">B8</span><div style="left:83px;top:77.49999999999997px;width:80.9px;height:23.2px;background:#fff"></div>
<span class="t" style="left:88.8px;top:79.10px;line-height:20px;letter-spacing:-1.07px;">SIUL2_0</span><div style="left:165.3px;top:77.49999999999997px;width:80.9px;height:23.2px;background:#fff"></div>
<span class="t" style="left:171.10000000000002px;top:79.10px;line-height:20px;letter-spacing:-0.00px;">gpio, 9</span><div style="left:247.60000000000002px;top:77.49999999999997px;width:39.99999999999998px;height:23.2px;background:#fff"></div>
<span class="t" style="left:253.40000000000003px;top:79.10px;line-height:20px;color:#a6a6a6;letter-spacing:1px">-&gt;</span><div style="left:289px;top:77.49999999999997px;width:82.39999999999998px;height:24.599999999999998px;background:#f78c8c"></div>
<span class="t" style="left:294.8px;top:79.10px;line-height:20px;letter-spacing:-0.69px;color:#c01818">[B8] PA_...</span><svg style="left:289.5px;top:77.99999999999997px;" width="5" height="5" viewBox="0 0 5 5"><rect x="0.6" y="0.6" width="3.6" height="3.6" fill="#fff" stroke="#c01818" stroke-width="1"/></svg>
<div style="left:371.4px;top:77.49999999999997px;width:80.9px;height:23.2px;background:#fff"></div>
<div style="left:453.7px;top:77.49999999999997px;width:80.9px;height:23.2px;background:#fff"></div>
<span class="t" style="left:459.5px;top:79.10px;line-height:20px;letter-spacing:0.30px;font-style:italic">n/a</span><div style="left:536px;top:77.49999999999997px;width:82.39999999999998px;height:24.599999999999998px;background:#ececec"></div>
<span class="t" style="left:541.8px;top:79.10px;line-height:20px;letter-spacing:-0.85px;color:#a8a8a8;font-style:italic">VDD_IO...</span><div style="left:618.4px;top:77.49999999999997px;width:80.90000000000006px;height:23.2px;background:#fff"></div>
<span class="t" style="left:624.1999999999999px;top:79.10px;line-height:20px;letter-spacing:0.30px;">Output</span><div style="left:700.7px;top:77.49999999999997px;width:80.89999999999995px;height:23.2px;background:#fff"></div>
<span class="t" style="left:706.5px;top:79.10px;line-height:20px;letter-spacing:-0.41px;font-style:italic">Enabled</span><div style="left:783px;top:77.49999999999997px;width:80.99999999999997px;height:23.2px;background:#fff"></div>
<span class="t" style="left:788.8px;top:79.10px;line-height:20px;letter-spacing:-0.22px;font-style:italic">Disabled</span><div style="left:865.4px;top:77.49999999999997px;width:80.90000000000006px;height:23.2px;background:#fff"></div>
<span class="t" style="left:871.1999999999999px;top:79.10px;line-height:20px;letter-spacing:-0.41px;font-style:italic">Enabled</span><div style="left:947.7px;top:77.49999999999997px;width:80.89999999999995px;height:23.2px;background:#fff"></div>
<span class="t" style="left:953.5px;top:79.10px;line-height:20px;letter-spacing:-0.84px;font-style:italic">FAST pa...</span><div style="left:1030px;top:77.49999999999997px;width:81.00000000000009px;height:23.2px;background:#fff"></div>
<span class="t" style="left:1035.8px;top:79.10px;line-height:20px;letter-spacing:-0.22px;font-style:italic">Disabled</span><div style="left:1112.4px;top:77.49999999999997px;width:80.89999999999995px;height:23.2px;background:#fff"></div>
<span class="t" style="left:1118.2px;top:79.10px;line-height:20px;letter-spacing:-0.06px;font-style:italic">Pulldown</span><div style="left:1194.7px;top:77.49999999999997px;width:80.89999999999995px;height:23.2px;background:#fff"></div>
<span class="t" style="left:1200.5px;top:79.10px;line-height:20px;letter-spacing:-0.31px;font-style:italic">Disable</span><div style="left:1277px;top:77.49999999999997px;width:81.00000000000009px;height:23.2px;background:#fff"></div>
<span class="t" style="left:1282.8px;top:79.10px;line-height:20px;letter-spacing:-0.40px;font-style:italic">Low</span><div style="left:1359.4px;top:77.49999999999997px;width:65.1999999999999px;height:24.599999999999998px;background:#ececec"></div>
<span class="t" style="left:1365.2px;top:79.10px;line-height:20px;letter-spacing:0.30px;font-style:italic">n/a</span><svg style="left:7.499999999999997px;top:82.29999999999998px;" width="11.6" height="11.6" viewBox="0 0 13 13"><circle cx="6.5" cy="6.5" r="6" fill="#d53c44"/><path d="M4.3 4.3 L8.7 8.7 M8.7 4.3 L4.3 8.7" stroke="#fff" stroke-width="2" stroke-linecap="round"/></svg>
<div style="left:1px;top:102.14999999999995px;width:80.6px;height:8px;background:#fff"></div>
<div style="left:83px;top:102.14999999999995px;width:80.9px;height:8px;background:#fff"></div>
<div style="left:165.3px;top:102.14999999999995px;width:80.9px;height:8px;background:#fff"></div>
<div style="left:247.60000000000002px;top:102.14999999999995px;width:39.99999999999998px;height:8px;background:#fff"></div>
<div style="left:289px;top:102.14999999999995px;width:80.99999999999997px;height:8px;background:#fff"></div>
<div style="left:371.4px;top:102.14999999999995px;width:80.9px;height:8px;background:#fff"></div>
<div style="left:453.7px;top:102.14999999999995px;width:80.9px;height:8px;background:#fff"></div>
<div style="left:536px;top:102.14999999999995px;width:82.39999999999998px;height:8px;background:#ececec"></div>
<div style="left:618.4px;top:102.14999999999995px;width:80.90000000000006px;height:8px;background:#fff"></div>
<div style="left:700.7px;top:102.14999999999995px;width:80.89999999999995px;height:8px;background:#fff"></div>
<div style="left:783px;top:102.14999999999995px;width:80.99999999999997px;height:8px;background:#fff"></div>
<div style="left:865.4px;top:102.14999999999995px;width:80.90000000000006px;height:8px;background:#fff"></div>
<div style="left:947.7px;top:102.14999999999995px;width:80.89999999999995px;height:8px;background:#fff"></div>
<div style="left:1030px;top:102.14999999999995px;width:81.00000000000009px;height:8px;background:#fff"></div>
<div style="left:1112.4px;top:102.14999999999995px;width:80.89999999999995px;height:8px;background:#fff"></div>
<div style="left:1194.7px;top:102.14999999999995px;width:80.89999999999995px;height:8px;background:#fff"></div>
<div style="left:1277px;top:102.14999999999995px;width:81.00000000000009px;height:8px;background:#fff"></div>
<div style="left:1359.4px;top:102.14999999999995px;width:65.1999999999999px;height:8px;background:#ececec"></div>
</div><div style="left:1485px;top:934px;width:6.3px;height:21px;background:#7f7f7f"></div>
<div style="left:73.2px;top:1002.2px;width:1226px;height:5.8px;background:#7f7f7f"></div>
</body></html>
